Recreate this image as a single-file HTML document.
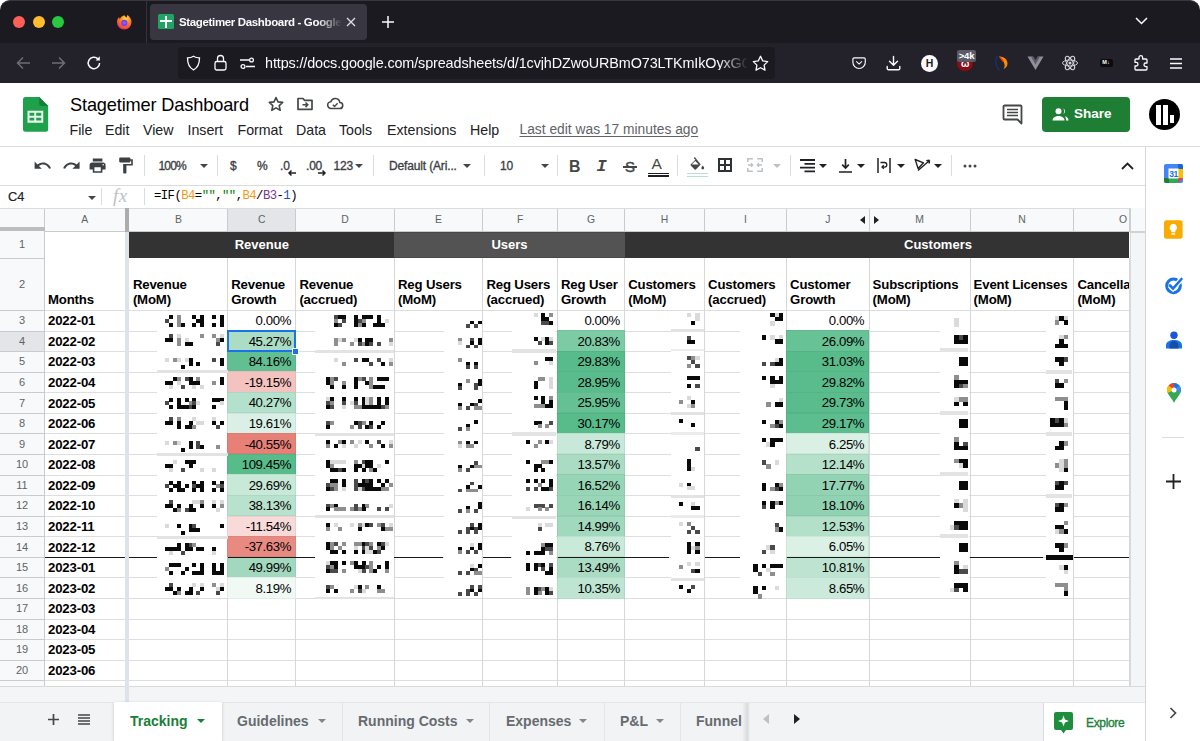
<!DOCTYPE html>
<html lang="en"><head><meta charset="utf-8"><title>Stagetimer Dashboard - Google Sheets</title>
<style>
*{box-sizing:border-box;margin:0;padding:0}
html,body{width:1200px;height:741px;overflow:hidden;background:#fff}
body{font-family:"Liberation Sans",Arial,sans-serif;position:relative;color:#202124}
.a{position:absolute}
.t{position:absolute;white-space:nowrap;line-height:1}
svg{position:absolute;overflow:visible}
#tabstrip{left:0;top:0;width:1200px;height:43px;background:#1b1a20;border-radius:10px 10px 0 0;border-top:1px solid #38373e}
#navbar{left:0;top:43px;width:1200px;height:40px;background:#23222b}
#urlbar{left:178px;top:47px;width:597px;height:32px;background:#1b1a20;border-radius:4px}
#acttab{left:150px;top:4px;width:217px;height:36px;background:#383741;border-radius:4px}
.menu{font-size:14.2px;color:#202124;top:123px}
.colh{font-size:10.4px;color:#5f6368;top:214.500px;text-align:center}
.rowh{font-size:11px;color:#5f6368;left:0;width:44px;text-align:center}
.hd{font-size:13.2px;letter-spacing:-.16px;font-weight:bold;color:#000;line-height:1;height:15px}
.pc{letter-spacing:-.4px;font-size:13.2px;color:#000;text-align:right}
.mo{letter-spacing:-.16px;font-size:13.2px;font-weight:bold;color:#000;left:48px}
.sheettab{font-size:14px;font-weight:bold;color:#676b70;top:714px}
.band{font-size:13px;font-weight:bold;color:#fff;text-align:center;top:238px}
</style></head><body>
<!-- ===== Browser chrome ===== -->
<div class="a" id="tabstrip"></div>
<div class="a" id="navbar"></div>
<div class="a" style="left:146px;top:0;width:1px;height:43px;background:#34333b"></div>
<div class="a" style="left:13px;top:15.5px;width:12px;height:12px;border-radius:50%;background:#fe5f57"></div>
<div class="a" style="left:32.5px;top:15.5px;width:12px;height:12px;border-radius:50%;background:#febc2e"></div>
<div class="a" style="left:52px;top:15.5px;width:12px;height:12px;border-radius:50%;background:#28c840"></div>
<!-- firefox icon -->
<svg style="left:115.500px;top:13.800px" width="16.500" height="16.500" viewBox="0 0 17 17"><defs><radialGradient id="fx" cx="0.6" cy="0.25" r="0.9"><stop offset="0" stop-color="#ffdc3e"/><stop offset="0.45" stop-color="#ff7a18"/><stop offset="1" stop-color="#e31587"/></radialGradient></defs><path d="M8.5 1.2c1 .8 1.6 1.6 1.9 2.6 1-.9 1.3-2 1.2-3 2.6 1.700 4.400 4.600 4.400 7.700a7.500 7.500 0 0 1-15 0c0-2.200.8-4 2.200-5.300 0 .8.200 1.400.6 1.900C4.500 3.500 6.300 2 8.500 1.200z" fill="url(#fx)"/><circle cx="8.6" cy="9.2" r="3.2" fill="#7542e5"/><circle cx="8.6" cy="9.200" r="1.700" fill="#9059ff"/></svg>
<div class="a" id="acttab"></div>
<!-- sheets favicon -->
<div class="a" style="left:158px;top:14px;width:16px;height:15px;background:#1fa463;border-radius:1.5px"></div>
<div class="a" style="left:164.500px;top:15.500px;width:2px;height:12px;background:#fff"></div>
<div class="a" style="left:160px;top:19.500px;width:12px;height:2px;background:#fff"></div>
<div class="t" style="left:179px;top:16.800px;font-size:11.500px;color:#fbfbfe;width:163px;overflow:hidden;font-weight:bold;letter-spacing:-.35px;-webkit-mask-image:linear-gradient(90deg,#000 85%,transparent 100%);mask-image:linear-gradient(90deg,#000 85%,transparent 100%)">Stagetimer Dashboard - Google Sheets</div>
<svg style="left:346px;top:16.500px" width="10" height="10" viewBox="0 0 10 10"><path d="M1 1l8 8M9 1l-8 8" stroke="#e0e0e6" stroke-width="1.300" fill="none"/></svg>
<svg style="left:381px;top:15px" width="14" height="14" viewBox="0 0 14 14"><path d="M7 1v12M1 7h12" stroke="#fbfbfe" stroke-width="1.500" fill="none"/></svg>
<svg style="left:1135px;top:17px" width="13" height="8" viewBox="0 0 13 8"><path d="M1 1l5.500 5.500L12 1" stroke="#fbfbfe" stroke-width="1.500" fill="none"/></svg>
<!-- nav buttons -->
<svg style="left:16px;top:56px" width="15" height="14" viewBox="0 0 15 14"><path d="M14 7H2M7 1.500L1.500 7 7 12.500" stroke="#6e6d76" stroke-width="1.500" fill="none"/></svg>
<svg style="left:51px;top:56px" width="15" height="14" viewBox="0 0 15 14"><path d="M1 7h12M8 1.500L13.500 7 8 12.500" stroke="#6e6d76" stroke-width="1.500" fill="none"/></svg>
<svg style="left:86px;top:55px" width="16" height="16" viewBox="0 0 16 16"><path d="M13.600 8a5.700 5.700 0 1 1-1.700-4.100" stroke="#fbfbfe" stroke-width="1.500" fill="none"/><path d="M13.800 1.200v4.200H9.600z" fill="#fbfbfe"/></svg>
<div class="a" id="urlbar"></div>
<!-- shield -->
<svg style="left:186px;top:55px" width="15" height="16" viewBox="0 0 15 16"><path d="M7.500 1.200c2 1.200 4 1.600 6 1.700 0 5.500-1.500 9.600-6 11.900-4.500-2.300-6-6.400-6-11.900 2-.1 4-.5 6-1.700z" stroke="#fbfbfe" stroke-width="1.300" fill="none"/></svg>
<!-- lock -->
<svg style="left:214px;top:54px" width="13" height="17" viewBox="0 0 13 17"><rect x="1" y="7.500" width="11" height="8.500" rx="1.800" stroke="#fbfbfe" stroke-width="1.300" fill="none"/><path d="M3.500 7.500V4.500a3 3 0 0 1 6 0v3" stroke="#fbfbfe" stroke-width="1.300" fill="none"/></svg>
<!-- permissions -->
<svg style="left:240px;top:57px" width="15" height="12" viewBox="0 0 15 12"><path d="M0 3h9M6 9.500h9" stroke="#fbfbfe" stroke-width="1.300"/><circle cx="11.500" cy="3" r="1.900" stroke="#fbfbfe" stroke-width="1.300" fill="none"/><circle cx="3" cy="9.500" r="1.900" stroke="#fbfbfe" stroke-width="1.300" fill="none"/></svg>
<div class="t" style="left:265px;top:56px;font-size:14.400px;letter-spacing:-.12px;color:#fbfbfe;width:483px;overflow:hidden;-webkit-mask-image:linear-gradient(90deg,#000 94%,transparent 100%);mask-image:linear-gradient(90deg,#000 94%,transparent 100%)">https://docs.google.com/spreadsheets/d/1cvjhDZwoURBmO73LTKmIkOyxGCf8</div>
<!-- bookmark star -->
<svg style="left:752px;top:54.500px" width="17" height="16" viewBox="0 0 17 16"><path d="M8.500 1.300l2.200 4.600 5 .7-3.600 3.500.9 5-4.500-2.400L4 15.100l.9-5L1.300 6.600l5-.7z" stroke="#fbfbfe" stroke-width="1.300" fill="none" stroke-linejoin="round"/></svg>
<!-- pocket -->
<svg style="left:852px;top:57px" width="14.200" height="12.400" viewBox="0 0 16 14"><path d="M2.500 1h11a1.500 1.500 0 0 1 1.500 1.500V6a7 7 0 0 1-14 0V2.500A1.500 1.500 0 0 1 2.500 1z" stroke="#fbfbfe" stroke-width="1.300" fill="none"/><path d="M4.800 5l3.200 3 3.200-3" stroke="#fbfbfe" stroke-width="1.300" fill="none"/></svg>
<!-- download -->
<svg style="left:886px;top:55px" width="15" height="16" viewBox="0 0 15 16"><path d="M7.500 1.500v8.500M3.500 6.200l4 4 4-4M1.200 11.500v2a1.200 1.200 0 0 0 1.200 1.200h10.200a1.200 1.200 0 0 0 1.200-1.200v-2" stroke="#fbfbfe" stroke-width="1.400" fill="none" stroke-linecap="round" stroke-linejoin="round"/></svg>
<!-- H -->
<div class="a" style="left:921px;top:54.500px;width:17px;height:17px;border-radius:50%;background:#fbfbfe"></div>
<div class="t" style="left:921px;top:58px;width:17px;text-align:center;font-size:10.500px;font-weight:bold;color:#1c1b22">H</div>
<!-- ublock -->
<div class="a" style="left:957.300px;top:56px;width:16px;height:14.500px;border-radius:50%;background:#8c0b14"></div>
<div class="t" style="left:957.300px;top:59px;width:16px;text-align:center;font-size:10px;color:#fff;font-weight:bold">ω</div>
<div class="a" style="left:957px;top:50.300px;width:19px;height:11.400px;border-radius:2px;background:#5b5b66"></div>
<div class="t" style="left:957px;top:51.300px;width:19px;text-align:center;font-size:9.500px;font-weight:bold;color:#fff;letter-spacing:-.2px">&gt;4k</div>
<!-- orange -->
<svg style="left:994px;top:54px" width="15" height="18" viewBox="0 0 15 18"><path d="M3.500 2C1.500 5 1.500 9 3 12.500c.6 1.500 1.500 3 2.500 4" stroke="#16306b" stroke-width="1.600" fill="none"/><path d="M5.500 2.500c4.500 0 8 3 8 7 0 2.800-1.800 4.800-4 5.500 1.600-2 1.500-4.500.2-6.700S6.300 4.500 5.500 2.500z" fill="#ff8a00"/><path d="M5.500 2.500c1.500 1.800 3 3.300 4 5.500" stroke="#e0431a" stroke-width="1.200" fill="none"/></svg>
<!-- V -->
<svg style="left:1027px;top:56px" width="17" height="14" viewBox="0 0 17 14"><path d="M0.500 0.500h5l3 5.500 3-5.500h5L8.500 14z" fill="#8f8f9d"/><path d="M4 0.500h2.500l2 3.500 2-3.500H13L8.500 8.500z" fill="#5b5b66"/></svg>
<!-- react -->
<svg style="left:1061px;top:54px" width="18" height="18" viewBox="-9 -9 18 18"><circle r="1.500" fill="#d0d0d7"/><g stroke="#d0d0d7" stroke-width="1" fill="none"><ellipse rx="7.500" ry="3"/><ellipse rx="7.500" ry="3" transform="rotate(60)"/><ellipse rx="7.500" ry="3" transform="rotate(120)"/></g></svg>
<!-- M arrow -->
<div class="a" style="left:1099.500px;top:58.800px;width:13px;height:8px;border-radius:2px;background:#0c0c0d"></div>
<div class="t" style="left:1099.500px;top:60.300px;width:13px;text-align:center;font-size:5.500px;font-weight:bold;color:#fff">M↓</div>
<!-- extensions puzzle -->
<svg style="left:1133px;top:54px" width="17" height="17" viewBox="0 0 17 17"><path d="M6 3.500a1.800 1.800 0 0 1 3.600 0V5h3.400a1 1 0 0 1 1 1v3h-1.200a1.800 1.800 0 0 0 0 3.600H14V15a1 1 0 0 1-1 1H3a1 1 0 0 1-1-1v-3h1.200a1.800 1.800 0 0 0 0-3.600H2V6a1 1 0 0 1 1-1h3z" stroke="#fbfbfe" stroke-width="1.300" fill="none" stroke-linejoin="round"/></svg>
<!-- hamburger -->
<svg style="left:1170.300px;top:57.500px" width="12" height="11" viewBox="0 0 12 11"><path d="M0 1h12M0 5.500h12M0 10h12" stroke="#fbfbfe" stroke-width="1.300"/></svg>
<!-- ===== Docs header ===== -->
<svg style="left:22.800px;top:97px" width="25.200" height="34.800" viewBox="0 0 50.400 69.600"><path d="M5 0h27.400l18 18v46.600a5 5 0 0 1-5 5H5a5 5 0 0 1-5-5V5a5 5 0 0 1 5-5z" fill="#1fa04b"/><path d="M32.400 0l18 18H37.400a5 5 0 0 1-5-5z" fill="#12803a"/><path d="M9 27.500h31.500v24H9zM13 31.500v5.800h9.500v-5.800zM26.500 31.500v5.800H36.500v-5.800zM13 41.300v5.800h9.500v-5.800zM26.500 41.300v5.800H36.500v-5.800z" fill="#e9f6ec" fill-rule="evenodd"/></svg>
<div class="t" id="doctitle" style="left:70px;top:96px;font-size:18.200px;color:#000;letter-spacing:-.15px">Stagetimer Dashboard</div>
<!-- star -->
<svg style="left:268px;top:96px" width="16" height="16" viewBox="0 0 16 16"><path d="M8 1.500l2 4.400 4.700.5-3.500 3.200 1 4.700L8 11.900l-4.200 2.400 1-4.700L1.300 6.400 6 5.900z" stroke="#444746" stroke-width="1.600" fill="none" stroke-linejoin="round"/></svg>
<!-- move folder -->
<svg style="left:297px;top:97px" width="16" height="13" viewBox="0 0 16 13"><path d="M1 1.500h5l1.500 1.800H15v9H1z" stroke="#444746" stroke-width="1.700" fill="none" stroke-linejoin="round"/><path d="M5.500 7.800h5M8.500 5.500l2.300 2.300-2.300 2.300" stroke="#444746" stroke-width="1.500" fill="none"/></svg>
<!-- cloud -->
<svg style="left:327px;top:98.200px" width="16.800" height="11.200" viewBox="0 0 18 12"><path d="M4.500 11.200a3.600 3.600 0 0 1-.4-7.200A5 5 0 0 1 13.800 4.800a3.200 3.200 0 0 1-.3 6.400z" stroke="#444746" stroke-width="1.700" fill="none"/><path d="M6.300 7.200l1.800 1.800 3.300-3.300" stroke="#444746" stroke-width="1.500" fill="none"/></svg>
<div class="t menu" style="left:69.500px">File</div>
<div class="t menu" style="left:105px">Edit</div>
<div class="t menu" style="left:143px">View</div>
<div class="t menu" style="left:187.500px">Insert</div>
<div class="t menu" style="left:237.500px">Format</div>
<div class="t menu" style="left:296px">Data</div>
<div class="t menu" style="left:339px">Tools</div>
<div class="t menu" style="left:387px">Extensions</div>
<div class="t menu" style="left:470px">Help</div>
<div class="t menu" id="lastedit" style="left:519.500px;font-size:13.800px;top:123.300px;color:#5f6368;text-decoration:underline;text-underline-offset:2px">Last edit was 17 minutes ago</div>
<!-- comment icon -->
<svg style="left:1002px;top:104px" width="21" height="21" viewBox="0 0 21 21"><path d="M2.500 1.500h16a1 1 0 0 1 1 1v17l-4-4h-13a1 1 0 0 1-1-1v-12a1 1 0 0 1 1-1z" stroke="#444746" stroke-width="1.800" fill="none" stroke-linejoin="round"/><path d="M5 5.500h11M5 8.500h11M5 11.500h11" stroke="#444746" stroke-width="1.500"/></svg>
<!-- share -->
<div class="a" style="left:1041.500px;top:97px;width:88px;height:35px;border-radius:4px;background:#1e7e34"></div>
<svg style="left:1052px;top:107.500px" width="17" height="13" viewBox="0 0 17 13"><circle cx="6.500" cy="3.300" r="3" fill="#fff"/><path d="M0.500 12.500c0-3 3-4.500 6-4.500s6 1.500 6 4.500z" fill="#fff"/><path d="M11.200 0.600a3 3 0 0 1 0 5.500 4.500 4.500 0 0 0 0-5.500zM13 8.300c1.800.6 3.500 1.800 3.500 4.200H14c0-1.800-.4-3.200-1-4.200z" fill="#fff"/></svg>
<div class="t" style="left:1074px;top:106.500px;font-size:13.500px;font-weight:bold;color:#fff">Share</div>
<!-- avatar -->
<div class="a" style="left:1148.800px;top:98.500px;width:31.600px;height:31.600px;border-radius:50%;background:#000;overflow:hidden"><div class="a" style="left:7.400px;top:6.500px;width:4.800px;height:19.500px;background:#fff"></div><div class="a" style="left:14.400px;top:6.500px;width:4.800px;height:19.500px;background:#fff"></div><div class="a" style="left:21px;top:16.200px;width:4.300px;height:8.800px;background:#fff"></div></div>
<div class="a" style="left:0;top:146px;width:1200px;height:1px;background:#dadce0"></div>
<!-- ===== Toolbar ===== -->
<div class="a" style="left:0;top:184.500px;width:1146px;height:1px;background:#dadce0"></div>
<style>.tb{font-size:12px;color:#3c4043;top:160px;-webkit-text-stroke:.32px #3c4043;letter-spacing:-.2px}.sep{position:absolute;top:155px;width:1px;height:21px;background:#dadce0}</style>
<!-- undo -->
<svg style="left:33.200px;top:155.900px" width="19.200" height="19.200" viewBox="0 0 24 24"><path d="M12.500 8c-2.650 0-5.050.99-6.900 2.600L2 7v9h9l-3.620-3.620c1.390-1.160 3.160-1.880 5.120-1.880 3.540 0 6.550 2.310 7.600 5.500l2.370-.78C21.080 11.030 17.150 8 12.500 8z" fill="#3c4043"/></svg>
<!-- redo -->
<svg style="left:61.600px;top:155.900px" width="19.200" height="19.200" viewBox="0 0 24 24"><path d="M18.400 10.600C16.550 8.990 14.150 8 11.500 8c-4.650 0-8.580 3.030-9.960 7.220L3.900 16c1.050-3.190 4.050-5.500 7.600-5.500 1.950 0 3.730.72 5.120 1.880L13 16h9V7l-3.600 3.600z" fill="#3c4043"/></svg>
<!-- print -->
<svg style="left:88.400px;top:155.900px" width="19.200" height="19.200" viewBox="0 0 24 24"><path d="M19 8H5c-1.660 0-3 1.340-3 3v6h4v4h12v-4h4v-6c0-1.660-1.340-3-3-3zm-3 11H8v-5h8v5zm3-7c-.55 0-1-.45-1-1s.45-1 1-1 1 .45 1 1-.45 1-1 1zm-1-9H6v4h12V3z" fill="#3c4043"/></svg>
<!-- paint format -->
<svg style="left:115.800px;top:155.900px" width="19.200" height="19.200" viewBox="0 0 24 24"><path d="M18 4V3c0-.55-.45-1-1-1H5c-.55 0-1 .45-1 1v4c0 .55.450 1 1 1h12c.55 0 1-.45 1-1V6h1v4H9v11c0 .55.450 1 1 1h2c.55 0 1-.45 1-1v-9h8V4h-3z" fill="#3c4043"/></svg>
<div class="sep" style="left:143.500px"></div>
<div class="t tb" style="left:158.500px;letter-spacing:-.8px">100%</div>
<svg style="left:200px;top:164px" width="8" height="4" viewBox="0 0 8 4"><path d="M0 0h8L4 4z" fill="#444746"/></svg>
<div class="sep" style="left:216.500px"></div>
<div class="t tb" style="left:230px">$</div>
<div class="t tb" style="left:257px">%</div>
<div class="t tb" style="left:280px">.0</div>
<svg style="left:288px;top:170px" width="8" height="6" viewBox="0 0 8 6"><path d="M8 3H1.500M3.500 0.500L1 3l2.500 2.500" stroke="#202124" stroke-width="1.500" fill="none"/></svg>
<div class="t tb" style="left:306px">.00</div>
<svg style="left:318px;top:170px" width="8" height="6" viewBox="0 0 8 6"><path d="M0 3h6.500M4.500 0.500L7 3 4.500 5.500" stroke="#202124" stroke-width="1.500" fill="none"/></svg>
<div class="t tb" style="left:333.500px">123</div>
<svg style="left:355px;top:164px" width="8" height="4" viewBox="0 0 8 4"><path d="M0 0h8L4 4z" fill="#444746"/></svg>
<div class="sep" style="left:372.500px"></div>
<div class="t tb" style="left:389px;letter-spacing:-.15px">Default (Ari...</div>
<svg style="left:463px;top:164px" width="8" height="4" viewBox="0 0 8 4"><path d="M0 0h8L4 4z" fill="#444746"/></svg>
<div class="sep" style="left:483.500px"></div>
<div class="t tb" style="left:500px">10</div>
<svg style="left:540.500px;top:164px" width="8" height="4" viewBox="0 0 8 4"><path d="M0 0h8L4 4z" fill="#444746"/></svg>
<div class="sep" style="left:557px"></div>
<div class="t" style="left:569px;top:158.500px;font-size:15.800px;font-weight:bold;color:#444746">B</div>
<div class="t" style="left:596.500px;top:157.800px;font-size:17px;font-weight:bold;font-style:italic;color:#444746;font-family:'Liberation Mono','Liberation Sans',monospace">I</div>
<div class="t" style="left:625px;top:159.300px;font-size:15px;color:#444746;-webkit-text-stroke:.4px #444746">S</div><div class="a" style="left:623px;top:166px;width:14px;height:1.500px;background:#444746"></div>
<div class="t" style="left:651.500px;top:156px;font-size:15.500px;color:#444746">A</div>
<div class="a" style="left:648.300px;top:173.200px;width:20.700px;height:1.300px;background:#202124"></div><div class="a" style="left:648.300px;top:175.400px;width:20.700px;height:1.700px;background:#202124"></div>
<div class="sep" style="left:677px"></div>
<!-- fill color -->
<svg style="left:688.500px;top:157px" width="16" height="13.300" viewBox="0 0 18 15"><path d="M6.500 0L5.300 1.200l1.900 1.900L2 8.300a1 1 0 0 0 0 1.400l4.300 4.300a1 1 0 0 0 1.400 0l5.500-5.500zM7 4.500l4 4H3z" fill="#444746" fill-rule="evenodd"/><path d="M15.500 9.500s-1.600 1.800-1.600 2.900a1.600 1.600 0 0 0 3.200 0c0-1.100-1.600-2.900-1.600-2.900z" fill="#444746"/></svg>
<div class="a" style="left:686.500px;top:173px;width:21px;height:1px;background:#b7e1cd"></div><div class="a" style="left:686.500px;top:175.600px;width:21px;height:1.200px;background:#b7e1cd"></div>
<!-- borders -->
<svg style="left:718px;top:158px" width="14" height="14" viewBox="0 0 14 14"><path d="M1 1h12v12H1zM7 1v12M1 7h12" stroke="#303134" stroke-width="2" fill="none"/></svg>
<!-- merge (disabled) -->
<svg style="left:747px;top:158px" width="16" height="14" viewBox="0 0 16 14"><path d="M0.800 4V0.800h5M10.200 0.800h5V4M15.200 10v3.200h-5M5.800 13.200h-5V10" stroke="#bdc1c6" stroke-width="1.500" fill="none"/><path d="M1 7h4.500M15 7h-4.500M4 5.300L5.700 7 4 8.700M12 5.300L10.300 7 12 8.700" stroke="#bdc1c6" stroke-width="1.300" fill="none"/></svg>
<svg style="left:773px;top:164px" width="8" height="4" viewBox="0 0 8 4"><path d="M0 0h8L4 4z" fill="#bdc1c6"/></svg>
<div class="sep" style="left:790px"></div>
<!-- halign (right) -->
<svg style="left:799.500px;top:158.500px" width="15" height="13" viewBox="0 0 15 13"><path d="M0 1h15M4.500 4.800h10.500M0 8.600h15M4.500 12.400h10.500" stroke="#202124" stroke-width="1.800"/></svg>
<svg style="left:819px;top:164px" width="8" height="4" viewBox="0 0 8 4"><path d="M0 0h8L4 4z" fill="#202124"/></svg>
<!-- valign bottom -->
<svg style="left:838.500px;top:158.500px" width="13" height="14" viewBox="0 0 13 14"><path d="M6.500 0v9M3.200 5.700l3.300 3.300 3.300-3.300M0 13h13" stroke="#202124" stroke-width="1.700" fill="none"/></svg>
<svg style="left:856.500px;top:164px" width="8" height="4" viewBox="0 0 8 4"><path d="M0 0h8L4 4z" fill="#202124"/></svg>
<!-- wrap/clip -->
<svg style="left:877px;top:157.500px" width="14" height="15" viewBox="0 0 14 15"><path d="M1 0v15M13 0v15" stroke="#202124" stroke-width="1.500"/><path d="M3.500 4.500h4a2.300 2.300 0 0 1 0 4.600H5M6.800 7.300L5 9.100l1.800 1.800" stroke="#202124" stroke-width="1.300" fill="none"/></svg>
<svg style="left:896.500px;top:164px" width="8" height="4" viewBox="0 0 8 4"><path d="M0 0h8L4 4z" fill="#202124"/></svg>
<!-- rotate -->
<svg style="left:914px;top:157px" width="17" height="16" viewBox="0 0 17 16"><path d="M1.200 2.500l8.300 3.300-5.400 5.800zM4 13.500L15 4M15.500 3.300l-3.200.3M15.500 3.300l-.3 3.200" stroke="#202124" stroke-width="1.400" fill="none" stroke-linejoin="round"/></svg>
<svg style="left:934px;top:164px" width="8" height="4" viewBox="0 0 8 4"><path d="M0 0h8L4 4z" fill="#202124"/></svg>
<div class="sep" style="left:951px"></div>
<svg style="left:963px;top:164px" width="14" height="4" viewBox="0 0 14 4"><circle cx="2" cy="2" r="1.500" fill="#444746"/><circle cx="7" cy="2" r="1.500" fill="#444746"/><circle cx="12" cy="2" r="1.500" fill="#444746"/></svg>
<svg style="left:1120.500px;top:162px" width="13" height="8" viewBox="0 0 13 8"><path d="M1 7l5.500-5.500L12 7" stroke="#202124" stroke-width="1.800" fill="none"/></svg>
<!-- ===== Formula bar ===== -->
<div class="t" style="left:8px;top:191.300px;font-size:12.800px;color:#202124;-webkit-text-stroke:.2px #202124">C4</div>
<svg style="left:87.500px;top:195.500px" width="8" height="4" viewBox="0 0 8 4"><path d="M0 0h8L4 4z" fill="#444746"/></svg>
<div class="a" style="left:101px;top:188px;width:1px;height:17px;background:#dadce0"></div>
<div class="t" style="left:113px;top:186px;font-size:19px;font-style:italic;color:#bdc1c6;font-family:'Liberation Serif',serif;letter-spacing:.5px">fx</div>
<div class="a" style="left:143.500px;top:188px;width:1px;height:17px;background:#dadce0"></div>
<div class="t" style="left:154px;top:190px;font-size:12.300px;color:#000;font-family:'Liberation Mono',monospace;letter-spacing:-.58px">=IF(<span style="color:#f7981d">B4</span>=<span style="color:#008000">""</span>,<span style="color:#008000">""</span>,<span style="color:#f7981d">B4</span>/<span style="color:#7e3794">B3</span>-<span style="color:#1155cc">1</span>)</div>
<div class="a" style="left:0;top:207.500px;width:1146px;height:1px;background:#dadce0"></div>
<!-- ===== Grid ===== -->
<div class="a" style="left:0;top:208px;width:1129.5px;height:23.500px;background:#f8f9fa"></div>
<div class="a" style="left:0;top:231px;width:44.500px;height:455px;background:#f8f9fa"></div>
<div class="a" style="left:227.6px;top:208px;width:68.2px;height:23.500px;background:#e3e5e9"></div>
<div class="a" style="left:0;top:331.00px;width:44.500px;height:20.58px;background:#e3e5e9"></div>
<div class="a" style="left:0;top:309.50px;width:1129.5px;height:1px;background:#dddedf"></div>
<div class="a" style="left:0;top:330.50px;width:1129.5px;height:1px;background:#dddedf"></div>
<div class="a" style="left:0;top:351.08px;width:1129.5px;height:1px;background:#dddedf"></div>
<div class="a" style="left:0;top:371.66px;width:1129.5px;height:1px;background:#dddedf"></div>
<div class="a" style="left:0;top:392.24px;width:1129.5px;height:1px;background:#dddedf"></div>
<div class="a" style="left:0;top:412.82px;width:1129.5px;height:1px;background:#dddedf"></div>
<div class="a" style="left:0;top:433.40px;width:1129.5px;height:1px;background:#dddedf"></div>
<div class="a" style="left:0;top:453.98px;width:1129.5px;height:1px;background:#dddedf"></div>
<div class="a" style="left:0;top:474.56px;width:1129.5px;height:1px;background:#dddedf"></div>
<div class="a" style="left:0;top:495.14px;width:1129.5px;height:1px;background:#dddedf"></div>
<div class="a" style="left:0;top:515.72px;width:1129.5px;height:1px;background:#dddedf"></div>
<div class="a" style="left:0;top:536.30px;width:1129.5px;height:1px;background:#dddedf"></div>
<div class="a" style="left:0;top:556.88px;width:1129.5px;height:1px;background:#dddedf"></div>
<div class="a" style="left:0;top:577.46px;width:1129.5px;height:1px;background:#dddedf"></div>
<div class="a" style="left:0;top:598.04px;width:1129.5px;height:1px;background:#dddedf"></div>
<div class="a" style="left:0;top:618.62px;width:1129.5px;height:1px;background:#dddedf"></div>
<div class="a" style="left:0;top:639.20px;width:1129.5px;height:1px;background:#dddedf"></div>
<div class="a" style="left:0;top:659.78px;width:1129.5px;height:1px;background:#dddedf"></div>
<div class="a" style="left:0;top:680.36px;width:1129.5px;height:1px;background:#dddedf"></div>
<div class="a" style="left:0;top:257.80px;width:44.500px;height:1px;background:#c8cbd0"></div>
<div class="a" style="left:0;top:309.50px;width:44.500px;height:1px;background:#c8cbd0"></div>
<div class="a" style="left:0;top:330.50px;width:44.500px;height:1px;background:#c8cbd0"></div>
<div class="a" style="left:0;top:351.08px;width:44.500px;height:1px;background:#c8cbd0"></div>
<div class="a" style="left:0;top:371.66px;width:44.500px;height:1px;background:#c8cbd0"></div>
<div class="a" style="left:0;top:392.24px;width:44.500px;height:1px;background:#c8cbd0"></div>
<div class="a" style="left:0;top:412.82px;width:44.500px;height:1px;background:#c8cbd0"></div>
<div class="a" style="left:0;top:433.40px;width:44.500px;height:1px;background:#c8cbd0"></div>
<div class="a" style="left:0;top:453.98px;width:44.500px;height:1px;background:#c8cbd0"></div>
<div class="a" style="left:0;top:474.56px;width:44.500px;height:1px;background:#c8cbd0"></div>
<div class="a" style="left:0;top:495.14px;width:44.500px;height:1px;background:#c8cbd0"></div>
<div class="a" style="left:0;top:515.72px;width:44.500px;height:1px;background:#c8cbd0"></div>
<div class="a" style="left:0;top:536.30px;width:44.500px;height:1px;background:#c8cbd0"></div>
<div class="a" style="left:0;top:556.88px;width:44.500px;height:1px;background:#c8cbd0"></div>
<div class="a" style="left:0;top:577.46px;width:44.500px;height:1px;background:#c8cbd0"></div>
<div class="a" style="left:0;top:598.04px;width:44.500px;height:1px;background:#c8cbd0"></div>
<div class="a" style="left:0;top:618.62px;width:44.500px;height:1px;background:#c8cbd0"></div>
<div class="a" style="left:0;top:639.20px;width:44.500px;height:1px;background:#c8cbd0"></div>
<div class="a" style="left:0;top:659.78px;width:44.500px;height:1px;background:#c8cbd0"></div>
<div class="a" style="left:0;top:680.36px;width:44.500px;height:1px;background:#c8cbd0"></div>
<div class="a" style="left:44.0px;top:208px;width:1px;height:478px;background:#c8cbd0"></div>
<div class="a" style="left:227.1px;top:208px;width:1px;height:23.500px;background:#c8cbd0"></div>
<div class="a" style="left:227.1px;top:258px;width:1px;height:428px;background:#d6d7d8"></div>
<div class="a" style="left:295.3px;top:208px;width:1px;height:23.500px;background:#c8cbd0"></div>
<div class="a" style="left:295.3px;top:258px;width:1px;height:428px;background:#d6d7d8"></div>
<div class="a" style="left:393.9px;top:208px;width:1px;height:23.500px;background:#c8cbd0"></div>
<div class="a" style="left:393.9px;top:258px;width:1px;height:428px;background:#d6d7d8"></div>
<div class="a" style="left:482.3px;top:208px;width:1px;height:23.500px;background:#c8cbd0"></div>
<div class="a" style="left:482.3px;top:258px;width:1px;height:428px;background:#d6d7d8"></div>
<div class="a" style="left:556.9px;top:208px;width:1px;height:23.500px;background:#c8cbd0"></div>
<div class="a" style="left:556.9px;top:258px;width:1px;height:428px;background:#d6d7d8"></div>
<div class="a" style="left:624.1px;top:208px;width:1px;height:23.500px;background:#c8cbd0"></div>
<div class="a" style="left:624.1px;top:258px;width:1px;height:428px;background:#d6d7d8"></div>
<div class="a" style="left:704.0px;top:208px;width:1px;height:23.500px;background:#c8cbd0"></div>
<div class="a" style="left:704.0px;top:258px;width:1px;height:428px;background:#d6d7d8"></div>
<div class="a" style="left:786.0px;top:208px;width:1px;height:23.500px;background:#c8cbd0"></div>
<div class="a" style="left:786.0px;top:258px;width:1px;height:428px;background:#d6d7d8"></div>
<div class="a" style="left:868.5px;top:208px;width:1px;height:23.500px;background:#c8cbd0"></div>
<div class="a" style="left:868.5px;top:258px;width:1px;height:428px;background:#d6d7d8"></div>
<div class="a" style="left:969.5px;top:208px;width:1px;height:23.500px;background:#c8cbd0"></div>
<div class="a" style="left:969.5px;top:258px;width:1px;height:428px;background:#d6d7d8"></div>
<div class="a" style="left:1073.3px;top:208px;width:1px;height:23.500px;background:#c8cbd0"></div>
<div class="a" style="left:1073.3px;top:258px;width:1px;height:428px;background:#d6d7d8"></div>
<div class="a" style="left:1129.0px;top:208px;width:1px;height:23.500px;background:#c8cbd0"></div>
<div class="a" style="left:1129.0px;top:258px;width:1px;height:428px;background:#d6d7d8"></div>
<div class="a" style="left:226.7px;top:330.30px;width:69.1px;height:21.28px;background:#aaddc4;box-shadow:inset 0 0 0 .6px rgba(0,40,20,.10)"></div>
<div class="a" style="left:226.7px;top:350.88px;width:69.1px;height:21.28px;background:#62bf92;box-shadow:inset 0 0 0 .6px rgba(0,40,20,.10)"></div>
<div class="a" style="left:226.7px;top:371.46px;width:69.1px;height:21.28px;background:#f4c3bf;box-shadow:inset 0 0 0 .6px rgba(0,40,20,.10)"></div>
<div class="a" style="left:226.7px;top:392.04px;width:69.1px;height:21.28px;background:#b4e1cb;box-shadow:inset 0 0 0 .6px rgba(0,40,20,.10)"></div>
<div class="a" style="left:226.7px;top:412.62px;width:69.1px;height:21.28px;background:#daf0e6;box-shadow:inset 0 0 0 .6px rgba(0,40,20,.10)"></div>
<div class="a" style="left:226.7px;top:433.20px;width:69.1px;height:21.28px;background:#e78178;box-shadow:inset 0 0 0 .6px rgba(0,40,20,.10)"></div>
<div class="a" style="left:226.7px;top:453.78px;width:69.1px;height:21.28px;background:#57bb8a;box-shadow:inset 0 0 0 .6px rgba(0,40,20,.10)"></div>
<div class="a" style="left:226.7px;top:474.36px;width:69.1px;height:21.28px;background:#c8e9d8;box-shadow:inset 0 0 0 .6px rgba(0,40,20,.10)"></div>
<div class="a" style="left:226.7px;top:494.94px;width:69.1px;height:21.28px;background:#b8e2cd;box-shadow:inset 0 0 0 .6px rgba(0,40,20,.10)"></div>
<div class="a" style="left:226.7px;top:515.52px;width:69.1px;height:21.28px;background:#f8dbd9;box-shadow:inset 0 0 0 .6px rgba(0,40,20,.10)"></div>
<div class="a" style="left:226.7px;top:536.10px;width:69.1px;height:21.28px;background:#e98a82;box-shadow:inset 0 0 0 .6px rgba(0,40,20,.10)"></div>
<div class="a" style="left:226.7px;top:556.68px;width:69.1px;height:21.28px;background:#a2d9be;box-shadow:inset 0 0 0 .6px rgba(0,40,20,.10)"></div>
<div class="a" style="left:226.7px;top:577.26px;width:69.1px;height:21.28px;background:#f0f9f4;box-shadow:inset 0 0 0 .6px rgba(0,40,20,.10)"></div>
<div class="a" style="left:556.5px;top:330.30px;width:68.1px;height:21.28px;background:#7dcba5;box-shadow:inset 0 0 0 .6px rgba(0,40,20,.10)"></div>
<div class="a" style="left:556.5px;top:350.88px;width:68.1px;height:21.28px;background:#58bb8b;box-shadow:inset 0 0 0 .6px rgba(0,40,20,.10)"></div>
<div class="a" style="left:556.5px;top:371.46px;width:68.1px;height:21.28px;background:#5abc8c;box-shadow:inset 0 0 0 .6px rgba(0,40,20,.10)"></div>
<div class="a" style="left:556.5px;top:392.04px;width:68.1px;height:21.28px;background:#65c194;box-shadow:inset 0 0 0 .6px rgba(0,40,20,.10)"></div>
<div class="a" style="left:556.5px;top:412.62px;width:68.1px;height:21.28px;background:#57bb8a;box-shadow:inset 0 0 0 .6px rgba(0,40,20,.10)"></div>
<div class="a" style="left:556.5px;top:433.20px;width:68.1px;height:21.28px;background:#c8e9d9;box-shadow:inset 0 0 0 .6px rgba(0,40,20,.10)"></div>
<div class="a" style="left:556.5px;top:453.78px;width:68.1px;height:21.28px;background:#a9dcc3;box-shadow:inset 0 0 0 .6px rgba(0,40,20,.10)"></div>
<div class="a" style="left:556.5px;top:474.36px;width:68.1px;height:21.28px;background:#96d5b6;box-shadow:inset 0 0 0 .6px rgba(0,40,20,.10)"></div>
<div class="a" style="left:556.5px;top:494.94px;width:68.1px;height:21.28px;background:#99d6b8;box-shadow:inset 0 0 0 .6px rgba(0,40,20,.10)"></div>
<div class="a" style="left:556.5px;top:515.52px;width:68.1px;height:21.28px;background:#a0d9bd;box-shadow:inset 0 0 0 .6px rgba(0,40,20,.10)"></div>
<div class="a" style="left:556.5px;top:536.10px;width:68.1px;height:21.28px;background:#c9e9d9;box-shadow:inset 0 0 0 .6px rgba(0,40,20,.10)"></div>
<div class="a" style="left:556.5px;top:556.68px;width:68.1px;height:21.28px;background:#aadcc4;box-shadow:inset 0 0 0 .6px rgba(0,40,20,.10)"></div>
<div class="a" style="left:556.5px;top:577.26px;width:68.1px;height:21.28px;background:#bee5d2;box-shadow:inset 0 0 0 .6px rgba(0,40,20,.10)"></div>
<div class="a" style="left:785.6px;top:330.30px;width:83.4px;height:21.28px;background:#67c295;box-shadow:inset 0 0 0 .6px rgba(0,40,20,.10)"></div>
<div class="a" style="left:785.6px;top:350.88px;width:83.4px;height:21.28px;background:#57bb8a;box-shadow:inset 0 0 0 .6px rgba(0,40,20,.10)"></div>
<div class="a" style="left:785.6px;top:371.46px;width:83.4px;height:21.28px;background:#5abc8c;box-shadow:inset 0 0 0 .6px rgba(0,40,20,.10)"></div>
<div class="a" style="left:785.6px;top:392.04px;width:83.4px;height:21.28px;background:#5abc8c;box-shadow:inset 0 0 0 .6px rgba(0,40,20,.10)"></div>
<div class="a" style="left:785.6px;top:412.62px;width:83.4px;height:21.28px;background:#5cbd8e;box-shadow:inset 0 0 0 .6px rgba(0,40,20,.10)"></div>
<div class="a" style="left:785.6px;top:433.20px;width:83.4px;height:21.28px;background:#daf0e5;box-shadow:inset 0 0 0 .6px rgba(0,40,20,.10)"></div>
<div class="a" style="left:785.6px;top:453.78px;width:83.4px;height:21.28px;background:#b5e1cb;box-shadow:inset 0 0 0 .6px rgba(0,40,20,.10)"></div>
<div class="a" style="left:785.6px;top:474.36px;width:83.4px;height:21.28px;background:#92d3b3;box-shadow:inset 0 0 0 .6px rgba(0,40,20,.10)"></div>
<div class="a" style="left:785.6px;top:494.94px;width:83.4px;height:21.28px;background:#90d2b2;box-shadow:inset 0 0 0 .6px rgba(0,40,20,.10)"></div>
<div class="a" style="left:785.6px;top:515.52px;width:83.4px;height:21.28px;background:#b2e0c9;box-shadow:inset 0 0 0 .6px rgba(0,40,20,.10)"></div>
<div class="a" style="left:785.6px;top:536.10px;width:83.4px;height:21.28px;background:#dbf1e6;box-shadow:inset 0 0 0 .6px rgba(0,40,20,.10)"></div>
<div class="a" style="left:785.6px;top:556.68px;width:83.4px;height:21.28px;background:#bde4d1;box-shadow:inset 0 0 0 .6px rgba(0,40,20,.10)"></div>
<div class="a" style="left:785.6px;top:577.26px;width:83.4px;height:21.28px;background:#cbeadb;box-shadow:inset 0 0 0 .6px rgba(0,40,20,.10)"></div>
<div class="a" style="left:0;top:207.500px;width:1146px;height:1px;background:#dadce0"></div>
<div class="a" style="left:44.500px;top:230.800px;width:1085.0px;height:1px;background:#c8cbd0"></div>
<div class="a" style="left:0;top:227px;width:44.500px;height:4px;background:#bdbdbd"></div>
<div class="a" style="left:124.700px;top:208px;width:4.600px;height:23.500px;background:#adadad"></div>
<div class="a" style="left:124.700px;top:231.500px;width:4.600px;height:470px;background:#dde2eb"></div>
<div class="a" style="left:129.3px;top:231.700px;width:265.1px;height:26.800px;background:#333"></div>
<div class="a" style="left:394.4px;top:231.700px;width:230.2px;height:26.800px;background:#535353;border-top:1px solid #484848;border-bottom:1px solid #484848"></div>
<div class="a" style="left:624.6px;top:231.700px;width:504.9px;height:26.800px;background:#333"></div>
<div class="t band" style="left:129.3px;width:265.1px">Revenue</div>
<div class="t band" style="left:394.4px;width:230.2px">Users</div>
<div class="t band" style="left:838px;width:200px">Customers</div>
<div class="t colh" style="left:44.5px;width:80.2px">A</div>
<div class="t colh" style="left:129.3px;width:98.3px">B</div>
<div class="t colh" style="left:227.6px;width:68.2px">C</div>
<div class="t colh" style="left:295.8px;width:98.6px">D</div>
<div class="t colh" style="left:394.4px;width:88.4px">E</div>
<div class="t colh" style="left:482.8px;width:74.6px">F</div>
<div class="t colh" style="left:557.4px;width:67.2px">G</div>
<div class="t colh" style="left:624.6px;width:79.9px">H</div>
<div class="t colh" style="left:704.5px;width:82.0px">I</div>
<div class="t colh" style="left:786.5px;width:82.5px">J</div>
<div class="t colh" style="left:869px;width:101.0px">M</div>
<div class="t colh" style="left:970px;width:103.8px">N</div>
<div class="t colh" style="left:1113px;width:20px">O</div>
<svg style="left:859.500px;top:216px" width="5" height="8" viewBox="0 0 5 8"><path d="M5 0v8L0 4z" fill="#202124"/></svg>
<svg style="left:873.500px;top:216px" width="5" height="8" viewBox="0 0 5 8"><path d="M0 0v8l5-4z" fill="#202124"/></svg>
<div class="t rowh" style="top:239.40px">1</div>
<div class="t rowh" style="top:278.65px">2</div>
<div class="t rowh" style="top:315.00px">3</div>
<div class="t rowh" style="top:335.79px">4</div>
<div class="t rowh" style="top:356.37px">5</div>
<div class="t rowh" style="top:376.95px">6</div>
<div class="t rowh" style="top:397.53px">7</div>
<div class="t rowh" style="top:418.11px">8</div>
<div class="t rowh" style="top:438.69px">9</div>
<div class="t rowh" style="top:459.27px">10</div>
<div class="t rowh" style="top:479.85px">11</div>
<div class="t rowh" style="top:500.43px">12</div>
<div class="t rowh" style="top:521.01px">13</div>
<div class="t rowh" style="top:541.59px">14</div>
<div class="t rowh" style="top:562.17px">15</div>
<div class="t rowh" style="top:582.75px">16</div>
<div class="t rowh" style="top:603.33px">17</div>
<div class="t rowh" style="top:623.91px">18</div>
<div class="t rowh" style="top:644.49px">19</div>
<div class="t rowh" style="top:665.07px">20</div>
<div class="t hd" style="left:48.0px;top:293.4px;width:76.7px;overflow:hidden">Months</div>
<div class="t hd" style="left:132.9px;top:277.8px;width:94.7px;overflow:hidden">Revenue</div>
<div class="t hd" style="left:132.9px;top:293.4px;width:94.7px;overflow:hidden">(MoM)</div>
<div class="t hd" style="left:231.2px;top:277.8px;width:64.6px;overflow:hidden">Revenue</div>
<div class="t hd" style="left:231.2px;top:293.4px;width:64.6px;overflow:hidden">Growth</div>
<div class="t hd" style="left:299.4px;top:277.8px;width:95.0px;overflow:hidden">Revenue</div>
<div class="t hd" style="left:299.4px;top:293.4px;width:95.0px;overflow:hidden">(accrued)</div>
<div class="t hd" style="left:398.0px;top:277.8px;width:84.8px;overflow:hidden">Reg Users</div>
<div class="t hd" style="left:398.0px;top:293.4px;width:84.8px;overflow:hidden">(MoM)</div>
<div class="t hd" style="left:486.4px;top:277.8px;width:71.0px;overflow:hidden">Reg Users</div>
<div class="t hd" style="left:486.4px;top:293.4px;width:71.0px;overflow:hidden">(accrued)</div>
<div class="t hd" style="left:561.0px;top:277.8px;width:63.6px;overflow:hidden">Reg User</div>
<div class="t hd" style="left:561.0px;top:293.4px;width:63.6px;overflow:hidden">Growth</div>
<div class="t hd" style="left:628.2px;top:277.8px;width:76.3px;overflow:hidden">Customers</div>
<div class="t hd" style="left:628.2px;top:293.4px;width:76.3px;overflow:hidden">(MoM)</div>
<div class="t hd" style="left:708.1px;top:277.8px;width:78.4px;overflow:hidden">Customers</div>
<div class="t hd" style="left:708.1px;top:293.4px;width:78.4px;overflow:hidden">(accrued)</div>
<div class="t hd" style="left:790.1px;top:277.8px;width:78.9px;overflow:hidden">Customer</div>
<div class="t hd" style="left:790.1px;top:293.4px;width:78.9px;overflow:hidden">Growth</div>
<div class="t hd" style="left:872.6px;top:277.8px;width:97.4px;overflow:hidden">Subscriptions</div>
<div class="t hd" style="left:872.6px;top:293.4px;width:97.4px;overflow:hidden">(MoM)</div>
<div class="t hd" style="left:973.6px;top:277.8px;width:100.2px;overflow:hidden">Event Licenses</div>
<div class="t hd" style="left:973.6px;top:293.4px;width:100.2px;overflow:hidden">(MoM)</div>
<div class="t hd" style="left:1077.4px;top:277.8px;width:52.1px;overflow:hidden">Cancella</div>
<div class="t hd" style="left:1077.4px;top:293.4px;width:52.1px;overflow:hidden">(MoM)</div>
<div class="t mo" style="top:314.20px">2022-01</div>
<div class="t mo" style="top:334.78px">2022-02</div>
<div class="t mo" style="top:355.36px">2022-03</div>
<div class="t mo" style="top:375.94px">2022-04</div>
<div class="t mo" style="top:396.52px">2022-05</div>
<div class="t mo" style="top:417.10px">2022-06</div>
<div class="t mo" style="top:437.68px">2022-07</div>
<div class="t mo" style="top:458.26px">2022-08</div>
<div class="t mo" style="top:478.84px">2022-09</div>
<div class="t mo" style="top:499.42px">2022-10</div>
<div class="t mo" style="top:520.00px">2022-11</div>
<div class="t mo" style="top:540.58px">2022-12</div>
<div class="t mo" style="top:561.16px">2023-01</div>
<div class="t mo" style="top:581.74px">2023-02</div>
<div class="t mo" style="top:602.32px">2023-03</div>
<div class="t mo" style="top:622.90px">2023-04</div>
<div class="t mo" style="top:643.48px">2023-05</div>
<div class="t mo" style="top:664.06px">2023-06</div>
<div class="t pc" style="left:227.6px;width:63.4px;top:314.10px">0.00%</div>
<div class="t pc" style="left:227.6px;width:63.4px;top:334.68px">45.27%</div>
<div class="t pc" style="left:227.6px;width:63.4px;top:355.26px">84.16%</div>
<div class="t pc" style="left:227.6px;width:63.4px;top:375.84px">-19.15%</div>
<div class="t pc" style="left:227.6px;width:63.4px;top:396.42px">40.27%</div>
<div class="t pc" style="left:227.6px;width:63.4px;top:417.00px">19.61%</div>
<div class="t pc" style="left:227.6px;width:63.4px;top:437.58px">-40.55%</div>
<div class="t pc" style="left:227.6px;width:63.4px;top:458.16px">109.45%</div>
<div class="t pc" style="left:227.6px;width:63.4px;top:478.74px">29.69%</div>
<div class="t pc" style="left:227.6px;width:63.4px;top:499.32px">38.13%</div>
<div class="t pc" style="left:227.6px;width:63.4px;top:519.90px">-11.54%</div>
<div class="t pc" style="left:227.6px;width:63.4px;top:540.48px">-37.63%</div>
<div class="t pc" style="left:227.6px;width:63.4px;top:561.06px">49.99%</div>
<div class="t pc" style="left:227.6px;width:63.4px;top:581.64px">8.19%</div>
<div class="t pc" style="left:557.4px;width:62.4px;top:314.10px">0.00%</div>
<div class="t pc" style="left:557.4px;width:62.4px;top:334.68px">20.83%</div>
<div class="t pc" style="left:557.4px;width:62.4px;top:355.26px">29.83%</div>
<div class="t pc" style="left:557.4px;width:62.4px;top:375.84px">28.95%</div>
<div class="t pc" style="left:557.4px;width:62.4px;top:396.42px">25.95%</div>
<div class="t pc" style="left:557.4px;width:62.4px;top:417.00px">30.17%</div>
<div class="t pc" style="left:557.4px;width:62.4px;top:437.58px">8.79%</div>
<div class="t pc" style="left:557.4px;width:62.4px;top:458.16px">13.57%</div>
<div class="t pc" style="left:557.4px;width:62.4px;top:478.74px">16.52%</div>
<div class="t pc" style="left:557.4px;width:62.4px;top:499.32px">16.14%</div>
<div class="t pc" style="left:557.4px;width:62.4px;top:519.90px">14.99%</div>
<div class="t pc" style="left:557.4px;width:62.4px;top:540.48px">8.76%</div>
<div class="t pc" style="left:557.4px;width:62.4px;top:561.06px">13.49%</div>
<div class="t pc" style="left:557.4px;width:62.4px;top:581.64px">10.35%</div>
<div class="t pc" style="left:786.5px;width:77.7px;top:314.10px">0.00%</div>
<div class="t pc" style="left:786.5px;width:77.7px;top:334.68px">26.09%</div>
<div class="t pc" style="left:786.5px;width:77.7px;top:355.26px">31.03%</div>
<div class="t pc" style="left:786.5px;width:77.7px;top:375.84px">29.82%</div>
<div class="t pc" style="left:786.5px;width:77.7px;top:396.42px">29.73%</div>
<div class="t pc" style="left:786.5px;width:77.7px;top:417.00px">29.17%</div>
<div class="t pc" style="left:786.5px;width:77.7px;top:437.58px">6.25%</div>
<div class="t pc" style="left:786.5px;width:77.7px;top:458.16px">12.14%</div>
<div class="t pc" style="left:786.5px;width:77.7px;top:478.74px">17.77%</div>
<div class="t pc" style="left:786.5px;width:77.7px;top:499.32px">18.10%</div>
<div class="t pc" style="left:786.5px;width:77.7px;top:519.90px">12.53%</div>
<div class="t pc" style="left:786.5px;width:77.7px;top:540.48px">6.05%</div>
<div class="t pc" style="left:786.5px;width:77.7px;top:561.06px">10.81%</div>
<div class="t pc" style="left:786.5px;width:77.7px;top:581.64px">8.65%</div>
<div class="a" style="left:44.5px;top:556.63px;width:80.2px;height:1.300px;background:#1a1a1a"></div>
<div class="a" style="left:129.3px;top:556.63px;width:27.7px;height:1.300px;background:#1a1a1a"></div>
<div class="a" style="left:228.0px;top:556.63px;width:68.0px;height:1.300px;background:#1a1a1a"></div>
<div class="a" style="left:296.0px;top:556.63px;width:19.0px;height:1.300px;background:#1a1a1a"></div>
<div class="a" style="left:394.3px;top:556.63px;width:48.7px;height:1.300px;background:#1a1a1a"></div>
<div class="a" style="left:483.0px;top:556.63px;width:28.0px;height:1.300px;background:#1a1a1a"></div>
<div class="a" style="left:558.0px;top:556.63px;width:67.0px;height:1.300px;background:#1a1a1a"></div>
<div class="a" style="left:625.0px;top:556.63px;width:44.0px;height:1.300px;background:#1a1a1a"></div>
<div class="a" style="left:704.5px;top:556.63px;width:35.5px;height:1.300px;background:#1a1a1a"></div>
<div class="a" style="left:787.0px;top:556.63px;width:82.0px;height:1.300px;background:#1a1a1a"></div>
<div class="a" style="left:869.0px;top:556.63px;width:71.0px;height:1.300px;background:#1a1a1a"></div>
<div class="a" style="left:970.0px;top:556.63px;width:73.0px;height:1.300px;background:#1a1a1a"></div>
<div class="a" style="left:1073.8px;top:556.63px;width:55.7px;height:1.300px;background:#1a1a1a"></div>
<div class="a" style="left:226.6px;top:330.00px;width:69.7px;height:22.08px;border:2px solid #1a73e8"></div>
<div class="a" style="left:292.3px;top:348.08px;width:7px;height:7px;background:#1a73e8;border:1px solid #fff"></div>
<!-- ===== mosaic blobs ===== --><style>#bl i{position:absolute;display:block}</style><div id="bl">
<i style="left:157px;top:311px;width:70.1px;height:287px;background:#fff"></i>
<i style="left:315px;top:311px;width:78.8px;height:287px;background:#fff"></i>
<i style="left:444px;top:311px;width:37.8px;height:287px;background:#fff"></i>
<i style="left:512px;top:311px;width:44.4px;height:287px;background:#fff"></i>
<i style="left:670.6px;top:311px;width:33.2px;height:287px;background:#fff"></i>
<i style="left:740px;top:311px;width:45.6px;height:287px;background:#fff"></i>
<i style="left:940px;top:311px;width:29.0px;height:287px;background:#fff"></i>
<i style="left:1045.5px;top:311px;width:27.8px;height:287px;background:#fff"></i>
<i style="left:157px;top:370px;width:70.6px;height:2.8px;background:#e2e3e4"></i>
<i style="left:157px;top:453px;width:70.6px;height:2.8px;background:#e2e3e4"></i>
<i style="left:157px;top:536px;width:70.6px;height:2.8px;background:#e2e3e4"></i>
<i style="left:315px;top:350.4px;width:79.0px;height:2.8px;background:#e2e3e4"></i>
<i style="left:315px;top:432.5px;width:79.0px;height:3.1px;background:#e2e3e4"></i>
<i style="left:315px;top:515px;width:79.0px;height:3.4px;background:#e2e3e4"></i>
<i style="left:315px;top:597.3px;width:79.0px;height:1.6px;background:#e2e3e4"></i>
<i style="left:511.7px;top:349.2px;width:44.7px;height:3.4px;background:#e2e3e4"></i>
<i style="left:511.7px;top:432.2px;width:44.7px;height:3.6px;background:#e2e3e4"></i>
<i style="left:511.7px;top:515.8px;width:44.7px;height:3.2px;background:#e2e3e4"></i>
<i style="left:670.6px;top:329px;width:33.9px;height:3.4px;background:#e2e3e4"></i>
<i style="left:670.6px;top:411.8px;width:33.9px;height:3.4px;background:#e2e3e4"></i>
<i style="left:670.6px;top:494.5px;width:33.9px;height:3.3px;background:#e2e3e4"></i>
<i style="left:670.6px;top:577.8px;width:33.9px;height:3.2px;background:#e2e3e4"></i>
<i style="left:670.6px;top:348.5px;width:33.9px;height:2.9px;background:#ececec"></i>
<i style="left:670.6px;top:431.5px;width:33.9px;height:3.2px;background:#ececec"></i>
<i style="left:670.6px;top:514.5px;width:33.9px;height:3.3px;background:#ececec"></i>
<i style="left:939.8px;top:348.4px;width:28.7px;height:4.1px;background:#e2e3e4"></i>
<i style="left:939.8px;top:410.5px;width:28.7px;height:4.0px;background:#e2e3e4"></i>
<i style="left:939.8px;top:472px;width:28.7px;height:4.0px;background:#e2e3e4"></i>
<i style="left:939.8px;top:534.2px;width:28.7px;height:4.0px;background:#e2e3e4"></i>
<i style="left:1045.6px;top:370.2px;width:26.9px;height:3.8px;background:#e2e3e4"></i>
<i style="left:1045.6px;top:432.3px;width:26.9px;height:3.7px;background:#e2e3e4"></i>
<i style="left:1045.6px;top:494.1px;width:26.9px;height:3.9px;background:#e2e3e4"></i>
<i style="left:1045.6px;top:555.2px;width:27.2px;height:4.6px;background:#0a0a0a"></i>
<i style="left:168.9px;top:314.7px;width:4.07px;height:4.07px;background:#0a0a0a"></i>
<i style="left:176.8px;top:314.7px;width:4.07px;height:4.07px;background:#8e8e8e"></i>
<i style="left:192.4px;top:314.7px;width:4.07px;height:4.07px;background:#0a0a0a"></i>
<i style="left:200.3px;top:314.7px;width:4.07px;height:4.07px;background:#0a0a0a"></i>
<i style="left:212.0px;top:314.7px;width:4.07px;height:4.07px;background:#0a0a0a"></i>
<i style="left:219.9px;top:314.7px;width:4.07px;height:4.07px;background:#0a0a0a"></i>
<i style="left:165.0px;top:318.6px;width:4.07px;height:4.07px;background:#4a4a4a"></i>
<i style="left:176.8px;top:318.6px;width:4.07px;height:4.07px;background:#8e8e8e"></i>
<i style="left:196.4px;top:318.6px;width:4.07px;height:4.07px;background:#0a0a0a"></i>
<i style="left:200.3px;top:318.6px;width:4.07px;height:4.07px;background:#0a0a0a"></i>
<i style="left:219.9px;top:318.6px;width:4.07px;height:4.07px;background:#0a0a0a"></i>
<i style="left:168.9px;top:322.5px;width:4.07px;height:4.07px;background:#0a0a0a"></i>
<i style="left:176.8px;top:322.5px;width:4.07px;height:4.07px;background:#8e8e8e"></i>
<i style="left:180.7px;top:322.5px;width:4.07px;height:4.07px;background:#0a0a0a"></i>
<i style="left:192.4px;top:322.5px;width:4.07px;height:4.07px;background:#0a0a0a"></i>
<i style="left:200.3px;top:322.5px;width:4.07px;height:4.07px;background:#0a0a0a"></i>
<i style="left:212.0px;top:322.5px;width:4.07px;height:4.07px;background:#0a0a0a"></i>
<i style="left:219.9px;top:322.5px;width:4.07px;height:4.07px;background:#0a0a0a"></i>
<i style="left:168.9px;top:334.0px;width:4.07px;height:4.07px;background:#4a4a4a"></i>
<i style="left:176.8px;top:334.0px;width:4.07px;height:4.07px;background:#dadada"></i>
<i style="left:200.3px;top:334.0px;width:4.07px;height:4.07px;background:#8e8e8e"></i>
<i style="left:212.0px;top:334.0px;width:4.07px;height:4.07px;background:#8e8e8e"></i>
<i style="left:219.9px;top:334.0px;width:4.07px;height:4.07px;background:#dadada"></i>
<i style="left:165.0px;top:337.9px;width:4.07px;height:4.07px;background:#0a0a0a"></i>
<i style="left:168.9px;top:337.9px;width:4.07px;height:4.07px;background:#0a0a0a"></i>
<i style="left:176.8px;top:337.9px;width:4.07px;height:4.07px;background:#8e8e8e"></i>
<i style="left:184.6px;top:337.9px;width:4.07px;height:4.07px;background:#dadada"></i>
<i style="left:216.0px;top:337.9px;width:4.07px;height:4.07px;background:#8e8e8e"></i>
<i style="left:219.9px;top:337.9px;width:4.07px;height:4.07px;background:#0a0a0a"></i>
<i style="left:176.8px;top:341.8px;width:4.07px;height:4.07px;background:#8e8e8e"></i>
<i style="left:184.6px;top:341.8px;width:4.07px;height:4.07px;background:#0a0a0a"></i>
<i style="left:188.5px;top:341.8px;width:4.07px;height:4.07px;background:#0a0a0a"></i>
<i style="left:216.0px;top:341.8px;width:4.07px;height:4.07px;background:#4a4a4a"></i>
<i style="left:165.0px;top:357.6px;width:4.07px;height:4.07px;background:#dadada"></i>
<i style="left:172.8px;top:357.6px;width:4.07px;height:4.07px;background:#8e8e8e"></i>
<i style="left:176.8px;top:357.6px;width:4.07px;height:4.07px;background:#dadada"></i>
<i style="left:184.6px;top:357.6px;width:4.07px;height:4.07px;background:#dadada"></i>
<i style="left:188.5px;top:357.6px;width:4.07px;height:4.07px;background:#0a0a0a"></i>
<i style="left:212.0px;top:357.6px;width:4.07px;height:4.07px;background:#4a4a4a"></i>
<i style="left:219.9px;top:357.6px;width:4.07px;height:4.07px;background:#0a0a0a"></i>
<i style="left:188.5px;top:361.5px;width:4.07px;height:4.07px;background:#0a0a0a"></i>
<i style="left:196.4px;top:361.5px;width:4.07px;height:4.07px;background:#0a0a0a"></i>
<i style="left:219.9px;top:361.5px;width:4.07px;height:4.07px;background:#0a0a0a"></i>
<i style="left:180.7px;top:365.4px;width:4.07px;height:4.07px;background:#0a0a0a"></i>
<i style="left:172.8px;top:377.2px;width:4.07px;height:4.07px;background:#0a0a0a"></i>
<i style="left:176.8px;top:377.2px;width:4.07px;height:4.07px;background:#8e8e8e"></i>
<i style="left:184.6px;top:377.2px;width:4.07px;height:4.07px;background:#4a4a4a"></i>
<i style="left:188.5px;top:377.2px;width:4.07px;height:4.07px;background:#0a0a0a"></i>
<i style="left:196.4px;top:377.2px;width:4.07px;height:4.07px;background:#8e8e8e"></i>
<i style="left:219.9px;top:377.2px;width:4.07px;height:4.07px;background:#0a0a0a"></i>
<i style="left:165.0px;top:381.1px;width:4.07px;height:4.07px;background:#0a0a0a"></i>
<i style="left:168.9px;top:381.1px;width:4.07px;height:4.07px;background:#0a0a0a"></i>
<i style="left:176.8px;top:381.1px;width:4.07px;height:4.07px;background:#dadada"></i>
<i style="left:188.5px;top:381.1px;width:4.07px;height:4.07px;background:#0a0a0a"></i>
<i style="left:192.4px;top:381.1px;width:4.07px;height:4.07px;background:#0a0a0a"></i>
<i style="left:196.4px;top:381.1px;width:4.07px;height:4.07px;background:#0a0a0a"></i>
<i style="left:212.0px;top:381.1px;width:4.07px;height:4.07px;background:#8e8e8e"></i>
<i style="left:219.9px;top:381.1px;width:4.07px;height:4.07px;background:#0a0a0a"></i>
<i style="left:168.9px;top:385.0px;width:4.07px;height:4.07px;background:#dadada"></i>
<i style="left:180.7px;top:385.0px;width:4.07px;height:4.07px;background:#4a4a4a"></i>
<i style="left:192.4px;top:385.0px;width:4.07px;height:4.07px;background:#dadada"></i>
<i style="left:200.3px;top:385.0px;width:4.07px;height:4.07px;background:#dadada"></i>
<i style="left:168.9px;top:397.5px;width:4.07px;height:4.07px;background:#0a0a0a"></i>
<i style="left:176.8px;top:397.5px;width:4.07px;height:4.07px;background:#0a0a0a"></i>
<i style="left:184.6px;top:397.5px;width:4.07px;height:4.07px;background:#0a0a0a"></i>
<i style="left:192.4px;top:397.5px;width:4.07px;height:4.07px;background:#0a0a0a"></i>
<i style="left:212.0px;top:397.5px;width:4.07px;height:4.07px;background:#0a0a0a"></i>
<i style="left:216.0px;top:397.5px;width:4.07px;height:4.07px;background:#0a0a0a"></i>
<i style="left:219.9px;top:397.5px;width:4.07px;height:4.07px;background:#0a0a0a"></i>
<i style="left:165.0px;top:401.4px;width:4.07px;height:4.07px;background:#4a4a4a"></i>
<i style="left:176.8px;top:401.4px;width:4.07px;height:4.07px;background:#0a0a0a"></i>
<i style="left:188.5px;top:401.4px;width:4.07px;height:4.07px;background:#8e8e8e"></i>
<i style="left:192.4px;top:401.4px;width:4.07px;height:4.07px;background:#4a4a4a"></i>
<i style="left:196.4px;top:401.4px;width:4.07px;height:4.07px;background:#dadada"></i>
<i style="left:219.9px;top:401.4px;width:4.07px;height:4.07px;background:#dadada"></i>
<i style="left:168.9px;top:405.3px;width:4.07px;height:4.07px;background:#0a0a0a"></i>
<i style="left:176.8px;top:405.3px;width:4.07px;height:4.07px;background:#0a0a0a"></i>
<i style="left:180.7px;top:405.3px;width:4.07px;height:4.07px;background:#0a0a0a"></i>
<i style="left:184.6px;top:405.3px;width:4.07px;height:4.07px;background:#0a0a0a"></i>
<i style="left:188.5px;top:405.3px;width:4.07px;height:4.07px;background:#4a4a4a"></i>
<i style="left:192.4px;top:405.3px;width:4.07px;height:4.07px;background:#0a0a0a"></i>
<i style="left:212.0px;top:405.3px;width:4.07px;height:4.07px;background:#0a0a0a"></i>
<i style="left:168.9px;top:417.0px;width:4.07px;height:4.07px;background:#4a4a4a"></i>
<i style="left:176.8px;top:417.0px;width:4.07px;height:4.07px;background:#8e8e8e"></i>
<i style="left:192.4px;top:417.0px;width:4.07px;height:4.07px;background:#dadada"></i>
<i style="left:212.0px;top:417.0px;width:4.07px;height:4.07px;background:#dadada"></i>
<i style="left:165.0px;top:420.9px;width:4.07px;height:4.07px;background:#0a0a0a"></i>
<i style="left:168.9px;top:420.9px;width:4.07px;height:4.07px;background:#0a0a0a"></i>
<i style="left:176.8px;top:420.9px;width:4.07px;height:4.07px;background:#0a0a0a"></i>
<i style="left:188.5px;top:420.9px;width:4.07px;height:4.07px;background:#0a0a0a"></i>
<i style="left:196.4px;top:420.9px;width:4.07px;height:4.07px;background:#dadada"></i>
<i style="left:200.3px;top:420.9px;width:4.07px;height:4.07px;background:#dadada"></i>
<i style="left:212.0px;top:420.9px;width:4.07px;height:4.07px;background:#0a0a0a"></i>
<i style="left:219.9px;top:420.9px;width:4.07px;height:4.07px;background:#0a0a0a"></i>
<i style="left:176.8px;top:424.8px;width:4.07px;height:4.07px;background:#0a0a0a"></i>
<i style="left:184.6px;top:424.8px;width:4.07px;height:4.07px;background:#0a0a0a"></i>
<i style="left:188.5px;top:424.8px;width:4.07px;height:4.07px;background:#0a0a0a"></i>
<i style="left:192.4px;top:424.8px;width:4.07px;height:4.07px;background:#8e8e8e"></i>
<i style="left:216.0px;top:424.8px;width:4.07px;height:4.07px;background:#4a4a4a"></i>
<i style="left:165.0px;top:440.6px;width:4.07px;height:4.07px;background:#dadada"></i>
<i style="left:172.8px;top:440.6px;width:4.07px;height:4.07px;background:#8e8e8e"></i>
<i style="left:176.8px;top:440.6px;width:4.07px;height:4.07px;background:#dadada"></i>
<i style="left:188.5px;top:440.6px;width:4.07px;height:4.07px;background:#0a0a0a"></i>
<i style="left:196.4px;top:440.6px;width:4.07px;height:4.07px;background:#4a4a4a"></i>
<i style="left:188.5px;top:444.5px;width:4.07px;height:4.07px;background:#0a0a0a"></i>
<i style="left:196.4px;top:444.5px;width:4.07px;height:4.07px;background:#4a4a4a"></i>
<i style="left:200.3px;top:444.5px;width:4.07px;height:4.07px;background:#0a0a0a"></i>
<i style="left:216.0px;top:444.5px;width:4.07px;height:4.07px;background:#8e8e8e"></i>
<i style="left:180.7px;top:448.4px;width:4.07px;height:4.07px;background:#0a0a0a"></i>
<i style="left:172.8px;top:460.2px;width:4.07px;height:4.07px;background:#dadada"></i>
<i style="left:184.6px;top:460.2px;width:4.07px;height:4.07px;background:#0a0a0a"></i>
<i style="left:188.5px;top:460.2px;width:4.07px;height:4.07px;background:#0a0a0a"></i>
<i style="left:192.4px;top:460.2px;width:4.07px;height:4.07px;background:#0a0a0a"></i>
<i style="left:165.0px;top:464.1px;width:4.07px;height:4.07px;background:#0a0a0a"></i>
<i style="left:168.9px;top:464.1px;width:4.07px;height:4.07px;background:#0a0a0a"></i>
<i style="left:188.5px;top:464.1px;width:4.07px;height:4.07px;background:#0a0a0a"></i>
<i style="left:168.9px;top:468.0px;width:4.07px;height:4.07px;background:#dadada"></i>
<i style="left:180.7px;top:468.0px;width:4.07px;height:4.07px;background:#4a4a4a"></i>
<i style="left:200.3px;top:468.0px;width:4.07px;height:4.07px;background:#dadada"></i>
<i style="left:212.0px;top:468.0px;width:4.07px;height:4.07px;background:#dadada"></i>
<i style="left:168.9px;top:480.5px;width:4.07px;height:4.07px;background:#0a0a0a"></i>
<i style="left:176.8px;top:480.5px;width:4.07px;height:4.07px;background:#0a0a0a"></i>
<i style="left:192.4px;top:480.5px;width:4.07px;height:4.07px;background:#0a0a0a"></i>
<i style="left:200.3px;top:480.5px;width:4.07px;height:4.07px;background:#0a0a0a"></i>
<i style="left:212.0px;top:480.5px;width:4.07px;height:4.07px;background:#0a0a0a"></i>
<i style="left:219.9px;top:480.5px;width:4.07px;height:4.07px;background:#0a0a0a"></i>
<i style="left:165.0px;top:484.4px;width:4.07px;height:4.07px;background:#4a4a4a"></i>
<i style="left:172.8px;top:484.4px;width:4.07px;height:4.07px;background:#0a0a0a"></i>
<i style="left:176.8px;top:484.4px;width:4.07px;height:4.07px;background:#0a0a0a"></i>
<i style="left:184.6px;top:484.4px;width:4.07px;height:4.07px;background:#0a0a0a"></i>
<i style="left:192.4px;top:484.4px;width:4.07px;height:4.07px;background:#4a4a4a"></i>
<i style="left:196.4px;top:484.4px;width:4.07px;height:4.07px;background:#0a0a0a"></i>
<i style="left:200.3px;top:484.4px;width:4.07px;height:4.07px;background:#0a0a0a"></i>
<i style="left:216.0px;top:484.4px;width:4.07px;height:4.07px;background:#8e8e8e"></i>
<i style="left:219.9px;top:484.4px;width:4.07px;height:4.07px;background:#4a4a4a"></i>
<i style="left:168.9px;top:488.3px;width:4.07px;height:4.07px;background:#0a0a0a"></i>
<i style="left:176.8px;top:488.3px;width:4.07px;height:4.07px;background:#0a0a0a"></i>
<i style="left:180.7px;top:488.3px;width:4.07px;height:4.07px;background:#0a0a0a"></i>
<i style="left:192.4px;top:488.3px;width:4.07px;height:4.07px;background:#0a0a0a"></i>
<i style="left:200.3px;top:488.3px;width:4.07px;height:4.07px;background:#0a0a0a"></i>
<i style="left:212.0px;top:488.3px;width:4.07px;height:4.07px;background:#0a0a0a"></i>
<i style="left:219.9px;top:488.3px;width:4.07px;height:4.07px;background:#0a0a0a"></i>
<i style="left:168.9px;top:500.0px;width:4.07px;height:4.07px;background:#4a4a4a"></i>
<i style="left:192.4px;top:500.0px;width:4.07px;height:4.07px;background:#dadada"></i>
<i style="left:196.4px;top:500.0px;width:4.07px;height:4.07px;background:#dadada"></i>
<i style="left:200.3px;top:500.0px;width:4.07px;height:4.07px;background:#8e8e8e"></i>
<i style="left:212.0px;top:500.0px;width:4.07px;height:4.07px;background:#dadada"></i>
<i style="left:219.9px;top:500.0px;width:4.07px;height:4.07px;background:#dadada"></i>
<i style="left:165.0px;top:503.9px;width:4.07px;height:4.07px;background:#0a0a0a"></i>
<i style="left:168.9px;top:503.9px;width:4.07px;height:4.07px;background:#0a0a0a"></i>
<i style="left:176.8px;top:503.9px;width:4.07px;height:4.07px;background:#0a0a0a"></i>
<i style="left:188.5px;top:503.9px;width:4.07px;height:4.07px;background:#0a0a0a"></i>
<i style="left:200.3px;top:503.9px;width:4.07px;height:4.07px;background:#0a0a0a"></i>
<i style="left:212.0px;top:503.9px;width:4.07px;height:4.07px;background:#0a0a0a"></i>
<i style="left:219.9px;top:503.9px;width:4.07px;height:4.07px;background:#8e8e8e"></i>
<i style="left:172.8px;top:507.8px;width:4.07px;height:4.07px;background:#0a0a0a"></i>
<i style="left:176.8px;top:507.8px;width:4.07px;height:4.07px;background:#8e8e8e"></i>
<i style="left:184.6px;top:507.8px;width:4.07px;height:4.07px;background:#4a4a4a"></i>
<i style="left:188.5px;top:507.8px;width:4.07px;height:4.07px;background:#0a0a0a"></i>
<i style="left:192.4px;top:507.8px;width:4.07px;height:4.07px;background:#0a0a0a"></i>
<i style="left:216.0px;top:507.8px;width:4.07px;height:4.07px;background:#dadada"></i>
<i style="left:165.0px;top:523.6px;width:4.07px;height:4.07px;background:#dadada"></i>
<i style="left:176.8px;top:523.6px;width:4.07px;height:4.07px;background:#0a0a0a"></i>
<i style="left:188.5px;top:523.6px;width:4.07px;height:4.07px;background:#0a0a0a"></i>
<i style="left:192.4px;top:523.6px;width:4.07px;height:4.07px;background:#4a4a4a"></i>
<i style="left:219.9px;top:523.6px;width:4.07px;height:4.07px;background:#0a0a0a"></i>
<i style="left:188.5px;top:527.5px;width:4.07px;height:4.07px;background:#0a0a0a"></i>
<i style="left:192.4px;top:527.5px;width:4.07px;height:4.07px;background:#0a0a0a"></i>
<i style="left:196.4px;top:527.5px;width:4.07px;height:4.07px;background:#0a0a0a"></i>
<i style="left:180.7px;top:531.4px;width:4.07px;height:4.07px;background:#0a0a0a"></i>
<i style="left:176.8px;top:543.2px;width:4.07px;height:4.07px;background:#0a0a0a"></i>
<i style="left:184.6px;top:543.2px;width:4.07px;height:4.07px;background:#0a0a0a"></i>
<i style="left:188.5px;top:543.2px;width:4.07px;height:4.07px;background:#4a4a4a"></i>
<i style="left:192.4px;top:543.2px;width:4.07px;height:4.07px;background:#8e8e8e"></i>
<i style="left:165.0px;top:547.1px;width:4.07px;height:4.07px;background:#0a0a0a"></i>
<i style="left:168.9px;top:547.1px;width:4.07px;height:4.07px;background:#0a0a0a"></i>
<i style="left:172.8px;top:547.1px;width:4.07px;height:4.07px;background:#0a0a0a"></i>
<i style="left:176.8px;top:547.1px;width:4.07px;height:4.07px;background:#0a0a0a"></i>
<i style="left:184.6px;top:547.1px;width:4.07px;height:4.07px;background:#0a0a0a"></i>
<i style="left:188.5px;top:547.1px;width:4.07px;height:4.07px;background:#0a0a0a"></i>
<i style="left:196.4px;top:547.1px;width:4.07px;height:4.07px;background:#0a0a0a"></i>
<i style="left:200.3px;top:547.1px;width:4.07px;height:4.07px;background:#0a0a0a"></i>
<i style="left:212.0px;top:547.1px;width:4.07px;height:4.07px;background:#0a0a0a"></i>
<i style="left:168.9px;top:551.0px;width:4.07px;height:4.07px;background:#dadada"></i>
<i style="left:180.7px;top:551.0px;width:4.07px;height:4.07px;background:#4a4a4a"></i>
<i style="left:212.0px;top:551.0px;width:4.07px;height:4.07px;background:#dadada"></i>
<i style="left:168.9px;top:563.0px;width:4.07px;height:4.07px;background:#0a0a0a"></i>
<i style="left:172.8px;top:563.0px;width:4.07px;height:4.07px;background:#0a0a0a"></i>
<i style="left:176.8px;top:563.0px;width:4.07px;height:4.07px;background:#0a0a0a"></i>
<i style="left:192.4px;top:563.0px;width:4.07px;height:4.07px;background:#0a0a0a"></i>
<i style="left:200.3px;top:563.0px;width:4.07px;height:4.07px;background:#0a0a0a"></i>
<i style="left:212.0px;top:563.0px;width:4.07px;height:4.07px;background:#0a0a0a"></i>
<i style="left:219.9px;top:563.0px;width:4.07px;height:4.07px;background:#0a0a0a"></i>
<i style="left:165.0px;top:566.9px;width:4.07px;height:4.07px;background:#8e8e8e"></i>
<i style="left:184.6px;top:566.9px;width:4.07px;height:4.07px;background:#0a0a0a"></i>
<i style="left:200.3px;top:566.9px;width:4.07px;height:4.07px;background:#0a0a0a"></i>
<i style="left:212.0px;top:566.9px;width:4.07px;height:4.07px;background:#0a0a0a"></i>
<i style="left:219.9px;top:566.9px;width:4.07px;height:4.07px;background:#0a0a0a"></i>
<i style="left:168.9px;top:570.8px;width:4.07px;height:4.07px;background:#0a0a0a"></i>
<i style="left:180.7px;top:570.8px;width:4.07px;height:4.07px;background:#0a0a0a"></i>
<i style="left:192.4px;top:570.8px;width:4.07px;height:4.07px;background:#0a0a0a"></i>
<i style="left:196.4px;top:570.8px;width:4.07px;height:4.07px;background:#0a0a0a"></i>
<i style="left:200.3px;top:570.8px;width:4.07px;height:4.07px;background:#0a0a0a"></i>
<i style="left:212.0px;top:570.8px;width:4.07px;height:4.07px;background:#0a0a0a"></i>
<i style="left:216.0px;top:570.8px;width:4.07px;height:4.07px;background:#0a0a0a"></i>
<i style="left:219.9px;top:570.8px;width:4.07px;height:4.07px;background:#0a0a0a"></i>
<i style="left:168.9px;top:582.7px;width:4.07px;height:4.07px;background:#4a4a4a"></i>
<i style="left:192.4px;top:582.7px;width:4.07px;height:4.07px;background:#dadada"></i>
<i style="left:200.3px;top:582.7px;width:4.07px;height:4.07px;background:#dadada"></i>
<i style="left:212.0px;top:582.7px;width:4.07px;height:4.07px;background:#8e8e8e"></i>
<i style="left:219.9px;top:582.7px;width:4.07px;height:4.07px;background:#dadada"></i>
<i style="left:165.0px;top:586.6px;width:4.07px;height:4.07px;background:#0a0a0a"></i>
<i style="left:168.9px;top:586.6px;width:4.07px;height:4.07px;background:#0a0a0a"></i>
<i style="left:176.8px;top:586.6px;width:4.07px;height:4.07px;background:#0a0a0a"></i>
<i style="left:188.5px;top:586.6px;width:4.07px;height:4.07px;background:#0a0a0a"></i>
<i style="left:200.3px;top:586.6px;width:4.07px;height:4.07px;background:#0a0a0a"></i>
<i style="left:216.0px;top:586.6px;width:4.07px;height:4.07px;background:#dadada"></i>
<i style="left:219.9px;top:586.6px;width:4.07px;height:4.07px;background:#0a0a0a"></i>
<i style="left:172.8px;top:590.5px;width:4.07px;height:4.07px;background:#0a0a0a"></i>
<i style="left:176.8px;top:590.5px;width:4.07px;height:4.07px;background:#8e8e8e"></i>
<i style="left:184.6px;top:590.5px;width:4.07px;height:4.07px;background:#0a0a0a"></i>
<i style="left:188.5px;top:590.5px;width:4.07px;height:4.07px;background:#0a0a0a"></i>
<i style="left:196.4px;top:590.5px;width:4.07px;height:4.07px;background:#4a4a4a"></i>
<i style="left:216.0px;top:590.5px;width:4.07px;height:4.07px;background:#4a4a4a"></i>
<i style="left:334.0px;top:314.7px;width:4.07px;height:4.07px;background:#4a4a4a"></i>
<i style="left:338.0px;top:314.7px;width:4.07px;height:4.07px;background:#0a0a0a"></i>
<i style="left:341.9px;top:314.7px;width:4.07px;height:4.07px;background:#0a0a0a"></i>
<i style="left:353.6px;top:314.7px;width:4.07px;height:4.07px;background:#0a0a0a"></i>
<i style="left:361.5px;top:314.7px;width:4.07px;height:4.07px;background:#0a0a0a"></i>
<i style="left:365.4px;top:314.7px;width:4.07px;height:4.07px;background:#0a0a0a"></i>
<i style="left:369.3px;top:314.7px;width:4.07px;height:4.07px;background:#0a0a0a"></i>
<i style="left:377.2px;top:314.7px;width:4.07px;height:4.07px;background:#0a0a0a"></i>
<i style="left:334.0px;top:318.6px;width:4.07px;height:4.07px;background:#8e8e8e"></i>
<i style="left:341.9px;top:318.6px;width:4.07px;height:4.07px;background:#4a4a4a"></i>
<i style="left:353.6px;top:318.6px;width:4.07px;height:4.07px;background:#0a0a0a"></i>
<i style="left:357.6px;top:318.6px;width:4.07px;height:4.07px;background:#4a4a4a"></i>
<i style="left:361.5px;top:318.6px;width:4.07px;height:4.07px;background:#8e8e8e"></i>
<i style="left:377.2px;top:318.6px;width:4.07px;height:4.07px;background:#0a0a0a"></i>
<i style="left:385.0px;top:318.6px;width:4.07px;height:4.07px;background:#dadada"></i>
<i style="left:334.0px;top:322.5px;width:4.07px;height:4.07px;background:#0a0a0a"></i>
<i style="left:338.0px;top:322.5px;width:4.07px;height:4.07px;background:#4a4a4a"></i>
<i style="left:353.6px;top:322.5px;width:4.07px;height:4.07px;background:#0a0a0a"></i>
<i style="left:357.6px;top:322.5px;width:4.07px;height:4.07px;background:#8e8e8e"></i>
<i style="left:361.5px;top:322.5px;width:4.07px;height:4.07px;background:#0a0a0a"></i>
<i style="left:373.2px;top:322.5px;width:4.07px;height:4.07px;background:#0a0a0a"></i>
<i style="left:377.2px;top:322.5px;width:4.07px;height:4.07px;background:#0a0a0a"></i>
<i style="left:381.1px;top:322.5px;width:4.07px;height:4.07px;background:#0a0a0a"></i>
<i style="left:334.0px;top:338.0px;width:4.07px;height:4.07px;background:#8e8e8e"></i>
<i style="left:338.0px;top:338.0px;width:4.07px;height:4.07px;background:#dadada"></i>
<i style="left:341.9px;top:338.0px;width:4.07px;height:4.07px;background:#8e8e8e"></i>
<i style="left:353.6px;top:338.0px;width:4.07px;height:4.07px;background:#dadada"></i>
<i style="left:357.6px;top:338.0px;width:4.07px;height:4.07px;background:#0a0a0a"></i>
<i style="left:365.4px;top:338.0px;width:4.07px;height:4.07px;background:#0a0a0a"></i>
<i style="left:369.3px;top:338.0px;width:4.07px;height:4.07px;background:#0a0a0a"></i>
<i style="left:388.9px;top:338.0px;width:4.07px;height:4.07px;background:#8e8e8e"></i>
<i style="left:334.0px;top:341.9px;width:4.07px;height:4.07px;background:#8e8e8e"></i>
<i style="left:349.7px;top:341.9px;width:4.07px;height:4.07px;background:#8e8e8e"></i>
<i style="left:357.6px;top:341.9px;width:4.07px;height:4.07px;background:#4a4a4a"></i>
<i style="left:361.5px;top:341.9px;width:4.07px;height:4.07px;background:#8e8e8e"></i>
<i style="left:365.4px;top:341.9px;width:4.07px;height:4.07px;background:#0a0a0a"></i>
<i style="left:369.3px;top:341.9px;width:4.07px;height:4.07px;background:#4a4a4a"></i>
<i style="left:377.2px;top:341.9px;width:4.07px;height:4.07px;background:#4a4a4a"></i>
<i style="left:388.9px;top:341.9px;width:4.07px;height:4.07px;background:#dadada"></i>
<i style="left:334.0px;top:357.6px;width:4.07px;height:4.07px;background:#dadada"></i>
<i style="left:353.6px;top:357.6px;width:4.07px;height:4.07px;background:#4a4a4a"></i>
<i style="left:361.5px;top:357.6px;width:4.07px;height:4.07px;background:#0a0a0a"></i>
<i style="left:365.4px;top:357.6px;width:4.07px;height:4.07px;background:#0a0a0a"></i>
<i style="left:377.2px;top:357.6px;width:4.07px;height:4.07px;background:#4a4a4a"></i>
<i style="left:388.9px;top:357.6px;width:4.07px;height:4.07px;background:#dadada"></i>
<i style="left:341.9px;top:361.5px;width:4.07px;height:4.07px;background:#8e8e8e"></i>
<i style="left:369.3px;top:361.5px;width:4.07px;height:4.07px;background:#4a4a4a"></i>
<i style="left:381.1px;top:361.5px;width:4.07px;height:4.07px;background:#0a0a0a"></i>
<i style="left:388.9px;top:361.5px;width:4.07px;height:4.07px;background:#8e8e8e"></i>
<i style="left:326.2px;top:377.2px;width:4.07px;height:4.07px;background:#0a0a0a"></i>
<i style="left:330.1px;top:377.2px;width:4.07px;height:4.07px;background:#8e8e8e"></i>
<i style="left:334.0px;top:377.2px;width:4.07px;height:4.07px;background:#4a4a4a"></i>
<i style="left:353.6px;top:377.2px;width:4.07px;height:4.07px;background:#0a0a0a"></i>
<i style="left:357.6px;top:377.2px;width:4.07px;height:4.07px;background:#8e8e8e"></i>
<i style="left:361.5px;top:377.2px;width:4.07px;height:4.07px;background:#4a4a4a"></i>
<i style="left:369.3px;top:377.2px;width:4.07px;height:4.07px;background:#8e8e8e"></i>
<i style="left:377.2px;top:377.2px;width:4.07px;height:4.07px;background:#0a0a0a"></i>
<i style="left:381.1px;top:377.2px;width:4.07px;height:4.07px;background:#0a0a0a"></i>
<i style="left:385.0px;top:377.2px;width:4.07px;height:4.07px;background:#0a0a0a"></i>
<i style="left:326.2px;top:381.1px;width:4.07px;height:4.07px;background:#0a0a0a"></i>
<i style="left:330.1px;top:381.1px;width:4.07px;height:4.07px;background:#8e8e8e"></i>
<i style="left:341.9px;top:381.1px;width:4.07px;height:4.07px;background:#8e8e8e"></i>
<i style="left:353.6px;top:381.1px;width:4.07px;height:4.07px;background:#0a0a0a"></i>
<i style="left:365.4px;top:381.1px;width:4.07px;height:4.07px;background:#0a0a0a"></i>
<i style="left:369.3px;top:381.1px;width:4.07px;height:4.07px;background:#8e8e8e"></i>
<i style="left:330.1px;top:385.0px;width:4.07px;height:4.07px;background:#0a0a0a"></i>
<i style="left:341.9px;top:385.0px;width:4.07px;height:4.07px;background:#0a0a0a"></i>
<i style="left:353.6px;top:385.0px;width:4.07px;height:4.07px;background:#0a0a0a"></i>
<i style="left:369.3px;top:385.0px;width:4.07px;height:4.07px;background:#8e8e8e"></i>
<i style="left:373.2px;top:385.0px;width:4.07px;height:4.07px;background:#0a0a0a"></i>
<i style="left:377.2px;top:385.0px;width:4.07px;height:4.07px;background:#0a0a0a"></i>
<i style="left:381.1px;top:385.0px;width:4.07px;height:4.07px;background:#0a0a0a"></i>
<i style="left:326.2px;top:397.0px;width:4.07px;height:4.07px;background:#dadada"></i>
<i style="left:330.1px;top:397.0px;width:4.07px;height:4.07px;background:#0a0a0a"></i>
<i style="left:341.9px;top:397.0px;width:4.07px;height:4.07px;background:#0a0a0a"></i>
<i style="left:353.6px;top:397.0px;width:4.07px;height:4.07px;background:#0a0a0a"></i>
<i style="left:361.5px;top:397.0px;width:4.07px;height:4.07px;background:#0a0a0a"></i>
<i style="left:365.4px;top:397.0px;width:4.07px;height:4.07px;background:#dadada"></i>
<i style="left:369.3px;top:397.0px;width:4.07px;height:4.07px;background:#8e8e8e"></i>
<i style="left:377.2px;top:397.0px;width:4.07px;height:4.07px;background:#0a0a0a"></i>
<i style="left:385.0px;top:397.0px;width:4.07px;height:4.07px;background:#0a0a0a"></i>
<i style="left:326.2px;top:400.9px;width:4.07px;height:4.07px;background:#4a4a4a"></i>
<i style="left:330.1px;top:400.9px;width:4.07px;height:4.07px;background:#8e8e8e"></i>
<i style="left:341.9px;top:400.9px;width:4.07px;height:4.07px;background:#4a4a4a"></i>
<i style="left:349.7px;top:400.9px;width:4.07px;height:4.07px;background:#dadada"></i>
<i style="left:353.6px;top:400.9px;width:4.07px;height:4.07px;background:#4a4a4a"></i>
<i style="left:361.5px;top:400.9px;width:4.07px;height:4.07px;background:#0a0a0a"></i>
<i style="left:365.4px;top:400.9px;width:4.07px;height:4.07px;background:#dadada"></i>
<i style="left:369.3px;top:400.9px;width:4.07px;height:4.07px;background:#8e8e8e"></i>
<i style="left:377.2px;top:400.9px;width:4.07px;height:4.07px;background:#0a0a0a"></i>
<i style="left:385.0px;top:400.9px;width:4.07px;height:4.07px;background:#0a0a0a"></i>
<i style="left:326.2px;top:404.8px;width:4.07px;height:4.07px;background:#0a0a0a"></i>
<i style="left:330.1px;top:404.8px;width:4.07px;height:4.07px;background:#4a4a4a"></i>
<i style="left:341.9px;top:404.8px;width:4.07px;height:4.07px;background:#dadada"></i>
<i style="left:353.6px;top:404.8px;width:4.07px;height:4.07px;background:#8e8e8e"></i>
<i style="left:357.6px;top:404.8px;width:4.07px;height:4.07px;background:#8e8e8e"></i>
<i style="left:361.5px;top:404.8px;width:4.07px;height:4.07px;background:#0a0a0a"></i>
<i style="left:365.4px;top:404.8px;width:4.07px;height:4.07px;background:#0a0a0a"></i>
<i style="left:369.3px;top:404.8px;width:4.07px;height:4.07px;background:#0a0a0a"></i>
<i style="left:373.2px;top:404.8px;width:4.07px;height:4.07px;background:#0a0a0a"></i>
<i style="left:377.2px;top:404.8px;width:4.07px;height:4.07px;background:#0a0a0a"></i>
<i style="left:381.1px;top:404.8px;width:4.07px;height:4.07px;background:#4a4a4a"></i>
<i style="left:385.0px;top:404.8px;width:4.07px;height:4.07px;background:#8e8e8e"></i>
<i style="left:326.2px;top:421.0px;width:4.07px;height:4.07px;background:#4a4a4a"></i>
<i style="left:330.1px;top:421.0px;width:4.07px;height:4.07px;background:#8e8e8e"></i>
<i style="left:353.6px;top:421.0px;width:4.07px;height:4.07px;background:#0a0a0a"></i>
<i style="left:357.6px;top:421.0px;width:4.07px;height:4.07px;background:#4a4a4a"></i>
<i style="left:361.5px;top:421.0px;width:4.07px;height:4.07px;background:#8e8e8e"></i>
<i style="left:369.3px;top:421.0px;width:4.07px;height:4.07px;background:#0a0a0a"></i>
<i style="left:381.1px;top:421.0px;width:4.07px;height:4.07px;background:#0a0a0a"></i>
<i style="left:326.2px;top:424.9px;width:4.07px;height:4.07px;background:#0a0a0a"></i>
<i style="left:349.7px;top:424.9px;width:4.07px;height:4.07px;background:#8e8e8e"></i>
<i style="left:357.6px;top:424.9px;width:4.07px;height:4.07px;background:#4a4a4a"></i>
<i style="left:365.4px;top:424.9px;width:4.07px;height:4.07px;background:#0a0a0a"></i>
<i style="left:369.3px;top:424.9px;width:4.07px;height:4.07px;background:#4a4a4a"></i>
<i style="left:377.2px;top:424.9px;width:4.07px;height:4.07px;background:#0a0a0a"></i>
<i style="left:326.2px;top:440.3px;width:4.07px;height:4.07px;background:#0a0a0a"></i>
<i style="left:338.0px;top:440.3px;width:4.07px;height:4.07px;background:#8e8e8e"></i>
<i style="left:341.9px;top:440.3px;width:4.07px;height:4.07px;background:#0a0a0a"></i>
<i style="left:349.7px;top:440.3px;width:4.07px;height:4.07px;background:#8e8e8e"></i>
<i style="left:357.6px;top:440.3px;width:4.07px;height:4.07px;background:#dadada"></i>
<i style="left:365.4px;top:440.3px;width:4.07px;height:4.07px;background:#0a0a0a"></i>
<i style="left:377.2px;top:440.3px;width:4.07px;height:4.07px;background:#4a4a4a"></i>
<i style="left:388.9px;top:440.3px;width:4.07px;height:4.07px;background:#dadada"></i>
<i style="left:326.2px;top:444.2px;width:4.07px;height:4.07px;background:#8e8e8e"></i>
<i style="left:334.0px;top:444.2px;width:4.07px;height:4.07px;background:#0a0a0a"></i>
<i style="left:341.9px;top:444.2px;width:4.07px;height:4.07px;background:#dadada"></i>
<i style="left:353.6px;top:444.2px;width:4.07px;height:4.07px;background:#dadada"></i>
<i style="left:369.3px;top:444.2px;width:4.07px;height:4.07px;background:#8e8e8e"></i>
<i style="left:381.1px;top:444.2px;width:4.07px;height:4.07px;background:#0a0a0a"></i>
<i style="left:388.9px;top:444.2px;width:4.07px;height:4.07px;background:#8e8e8e"></i>
<i style="left:326.2px;top:460.0px;width:4.07px;height:4.07px;background:#0a0a0a"></i>
<i style="left:330.1px;top:460.0px;width:4.07px;height:4.07px;background:#dadada"></i>
<i style="left:334.0px;top:460.0px;width:4.07px;height:4.07px;background:#dadada"></i>
<i style="left:338.0px;top:460.0px;width:4.07px;height:4.07px;background:#dadada"></i>
<i style="left:341.9px;top:460.0px;width:4.07px;height:4.07px;background:#dadada"></i>
<i style="left:353.6px;top:460.0px;width:4.07px;height:4.07px;background:#8e8e8e"></i>
<i style="left:361.5px;top:460.0px;width:4.07px;height:4.07px;background:#4a4a4a"></i>
<i style="left:365.4px;top:460.0px;width:4.07px;height:4.07px;background:#0a0a0a"></i>
<i style="left:369.3px;top:460.0px;width:4.07px;height:4.07px;background:#0a0a0a"></i>
<i style="left:385.0px;top:460.0px;width:4.07px;height:4.07px;background:#0a0a0a"></i>
<i style="left:326.2px;top:463.9px;width:4.07px;height:4.07px;background:#0a0a0a"></i>
<i style="left:330.1px;top:463.9px;width:4.07px;height:4.07px;background:#8e8e8e"></i>
<i style="left:353.6px;top:463.9px;width:4.07px;height:4.07px;background:#0a0a0a"></i>
<i style="left:357.6px;top:463.9px;width:4.07px;height:4.07px;background:#0a0a0a"></i>
<i style="left:361.5px;top:463.9px;width:4.07px;height:4.07px;background:#dadada"></i>
<i style="left:365.4px;top:463.9px;width:4.07px;height:4.07px;background:#0a0a0a"></i>
<i style="left:369.3px;top:463.9px;width:4.07px;height:4.07px;background:#0a0a0a"></i>
<i style="left:377.2px;top:463.9px;width:4.07px;height:4.07px;background:#dadada"></i>
<i style="left:330.1px;top:467.8px;width:4.07px;height:4.07px;background:#0a0a0a"></i>
<i style="left:334.0px;top:467.8px;width:4.07px;height:4.07px;background:#0a0a0a"></i>
<i style="left:338.0px;top:467.8px;width:4.07px;height:4.07px;background:#4a4a4a"></i>
<i style="left:341.9px;top:467.8px;width:4.07px;height:4.07px;background:#0a0a0a"></i>
<i style="left:353.6px;top:467.8px;width:4.07px;height:4.07px;background:#0a0a0a"></i>
<i style="left:361.5px;top:467.8px;width:4.07px;height:4.07px;background:#0a0a0a"></i>
<i style="left:369.3px;top:467.8px;width:4.07px;height:4.07px;background:#8e8e8e"></i>
<i style="left:373.2px;top:467.8px;width:4.07px;height:4.07px;background:#0a0a0a"></i>
<i style="left:330.1px;top:479.0px;width:4.07px;height:4.07px;background:#0a0a0a"></i>
<i style="left:334.0px;top:479.0px;width:4.07px;height:4.07px;background:#0a0a0a"></i>
<i style="left:341.9px;top:479.0px;width:4.07px;height:4.07px;background:#0a0a0a"></i>
<i style="left:353.6px;top:479.0px;width:4.07px;height:4.07px;background:#4a4a4a"></i>
<i style="left:361.5px;top:479.0px;width:4.07px;height:4.07px;background:#0a0a0a"></i>
<i style="left:365.4px;top:479.0px;width:4.07px;height:4.07px;background:#4a4a4a"></i>
<i style="left:369.3px;top:479.0px;width:4.07px;height:4.07px;background:#0a0a0a"></i>
<i style="left:377.2px;top:479.0px;width:4.07px;height:4.07px;background:#0a0a0a"></i>
<i style="left:385.0px;top:479.0px;width:4.07px;height:4.07px;background:#0a0a0a"></i>
<i style="left:326.2px;top:482.9px;width:4.07px;height:4.07px;background:#4a4a4a"></i>
<i style="left:330.1px;top:482.9px;width:4.07px;height:4.07px;background:#8e8e8e"></i>
<i style="left:334.0px;top:482.9px;width:4.07px;height:4.07px;background:#8e8e8e"></i>
<i style="left:341.9px;top:482.9px;width:4.07px;height:4.07px;background:#0a0a0a"></i>
<i style="left:353.6px;top:482.9px;width:4.07px;height:4.07px;background:#4a4a4a"></i>
<i style="left:357.6px;top:482.9px;width:4.07px;height:4.07px;background:#0a0a0a"></i>
<i style="left:361.5px;top:482.9px;width:4.07px;height:4.07px;background:#0a0a0a"></i>
<i style="left:365.4px;top:482.9px;width:4.07px;height:4.07px;background:#0a0a0a"></i>
<i style="left:369.3px;top:482.9px;width:4.07px;height:4.07px;background:#0a0a0a"></i>
<i style="left:381.1px;top:482.9px;width:4.07px;height:4.07px;background:#0a0a0a"></i>
<i style="left:388.9px;top:482.9px;width:4.07px;height:4.07px;background:#8e8e8e"></i>
<i style="left:326.2px;top:486.8px;width:4.07px;height:4.07px;background:#0a0a0a"></i>
<i style="left:330.1px;top:486.8px;width:4.07px;height:4.07px;background:#4a4a4a"></i>
<i style="left:334.0px;top:486.8px;width:4.07px;height:4.07px;background:#8e8e8e"></i>
<i style="left:341.9px;top:486.8px;width:4.07px;height:4.07px;background:#dadada"></i>
<i style="left:353.6px;top:486.8px;width:4.07px;height:4.07px;background:#4a4a4a"></i>
<i style="left:357.6px;top:486.8px;width:4.07px;height:4.07px;background:#dadada"></i>
<i style="left:361.5px;top:486.8px;width:4.07px;height:4.07px;background:#4a4a4a"></i>
<i style="left:365.4px;top:486.8px;width:4.07px;height:4.07px;background:#0a0a0a"></i>
<i style="left:369.3px;top:486.8px;width:4.07px;height:4.07px;background:#0a0a0a"></i>
<i style="left:373.2px;top:486.8px;width:4.07px;height:4.07px;background:#0a0a0a"></i>
<i style="left:377.2px;top:486.8px;width:4.07px;height:4.07px;background:#0a0a0a"></i>
<i style="left:381.1px;top:486.8px;width:4.07px;height:4.07px;background:#8e8e8e"></i>
<i style="left:385.0px;top:486.8px;width:4.07px;height:4.07px;background:#8e8e8e"></i>
<i style="left:326.2px;top:503.5px;width:4.07px;height:4.07px;background:#4a4a4a"></i>
<i style="left:330.1px;top:503.5px;width:4.07px;height:4.07px;background:#8e8e8e"></i>
<i style="left:334.0px;top:503.5px;width:4.07px;height:4.07px;background:#0a0a0a"></i>
<i style="left:353.6px;top:503.5px;width:4.07px;height:4.07px;background:#4a4a4a"></i>
<i style="left:361.5px;top:503.5px;width:4.07px;height:4.07px;background:#0a0a0a"></i>
<i style="left:365.4px;top:503.5px;width:4.07px;height:4.07px;background:#8e8e8e"></i>
<i style="left:388.9px;top:503.5px;width:4.07px;height:4.07px;background:#dadada"></i>
<i style="left:326.2px;top:507.4px;width:4.07px;height:4.07px;background:#0a0a0a"></i>
<i style="left:334.0px;top:507.4px;width:4.07px;height:4.07px;background:#8e8e8e"></i>
<i style="left:338.0px;top:507.4px;width:4.07px;height:4.07px;background:#8e8e8e"></i>
<i style="left:341.9px;top:507.4px;width:4.07px;height:4.07px;background:#8e8e8e"></i>
<i style="left:349.7px;top:507.4px;width:4.07px;height:4.07px;background:#8e8e8e"></i>
<i style="left:353.6px;top:507.4px;width:4.07px;height:4.07px;background:#4a4a4a"></i>
<i style="left:357.6px;top:507.4px;width:4.07px;height:4.07px;background:#8e8e8e"></i>
<i style="left:361.5px;top:507.4px;width:4.07px;height:4.07px;background:#0a0a0a"></i>
<i style="left:377.2px;top:507.4px;width:4.07px;height:4.07px;background:#4a4a4a"></i>
<i style="left:385.0px;top:507.4px;width:4.07px;height:4.07px;background:#4a4a4a"></i>
<i style="left:326.2px;top:522.9px;width:4.07px;height:4.07px;background:#0a0a0a"></i>
<i style="left:334.0px;top:522.9px;width:4.07px;height:4.07px;background:#dadada"></i>
<i style="left:349.7px;top:522.9px;width:4.07px;height:4.07px;background:#dadada"></i>
<i style="left:357.6px;top:522.9px;width:4.07px;height:4.07px;background:#8e8e8e"></i>
<i style="left:361.5px;top:522.9px;width:4.07px;height:4.07px;background:#dadada"></i>
<i style="left:365.4px;top:522.9px;width:4.07px;height:4.07px;background:#0a0a0a"></i>
<i style="left:369.3px;top:522.9px;width:4.07px;height:4.07px;background:#4a4a4a"></i>
<i style="left:377.2px;top:522.9px;width:4.07px;height:4.07px;background:#8e8e8e"></i>
<i style="left:381.1px;top:522.9px;width:4.07px;height:4.07px;background:#4a4a4a"></i>
<i style="left:388.9px;top:522.9px;width:4.07px;height:4.07px;background:#dadada"></i>
<i style="left:326.2px;top:526.8px;width:4.07px;height:4.07px;background:#8e8e8e"></i>
<i style="left:338.0px;top:526.8px;width:4.07px;height:4.07px;background:#8e8e8e"></i>
<i style="left:357.6px;top:526.8px;width:4.07px;height:4.07px;background:#0a0a0a"></i>
<i style="left:381.1px;top:526.8px;width:4.07px;height:4.07px;background:#0a0a0a"></i>
<i style="left:385.0px;top:526.8px;width:4.07px;height:4.07px;background:#8e8e8e"></i>
<i style="left:388.9px;top:526.8px;width:4.07px;height:4.07px;background:#8e8e8e"></i>
<i style="left:326.2px;top:542.0px;width:4.07px;height:4.07px;background:#0a0a0a"></i>
<i style="left:330.1px;top:542.0px;width:4.07px;height:4.07px;background:#8e8e8e"></i>
<i style="left:334.0px;top:542.0px;width:4.07px;height:4.07px;background:#4a4a4a"></i>
<i style="left:341.9px;top:542.0px;width:4.07px;height:4.07px;background:#8e8e8e"></i>
<i style="left:353.6px;top:542.0px;width:4.07px;height:4.07px;background:#8e8e8e"></i>
<i style="left:357.6px;top:542.0px;width:4.07px;height:4.07px;background:#8e8e8e"></i>
<i style="left:361.5px;top:542.0px;width:4.07px;height:4.07px;background:#0a0a0a"></i>
<i style="left:365.4px;top:542.0px;width:4.07px;height:4.07px;background:#4a4a4a"></i>
<i style="left:369.3px;top:542.0px;width:4.07px;height:4.07px;background:#8e8e8e"></i>
<i style="left:377.2px;top:542.0px;width:4.07px;height:4.07px;background:#0a0a0a"></i>
<i style="left:381.1px;top:542.0px;width:4.07px;height:4.07px;background:#4a4a4a"></i>
<i style="left:385.0px;top:542.0px;width:4.07px;height:4.07px;background:#dadada"></i>
<i style="left:326.2px;top:545.9px;width:4.07px;height:4.07px;background:#0a0a0a"></i>
<i style="left:330.1px;top:545.9px;width:4.07px;height:4.07px;background:#8e8e8e"></i>
<i style="left:338.0px;top:545.9px;width:4.07px;height:4.07px;background:#8e8e8e"></i>
<i style="left:353.6px;top:545.9px;width:4.07px;height:4.07px;background:#dadada"></i>
<i style="left:361.5px;top:545.9px;width:4.07px;height:4.07px;background:#4a4a4a"></i>
<i style="left:365.4px;top:545.9px;width:4.07px;height:4.07px;background:#dadada"></i>
<i style="left:369.3px;top:545.9px;width:4.07px;height:4.07px;background:#4a4a4a"></i>
<i style="left:377.2px;top:545.9px;width:4.07px;height:4.07px;background:#8e8e8e"></i>
<i style="left:381.1px;top:545.9px;width:4.07px;height:4.07px;background:#0a0a0a"></i>
<i style="left:330.1px;top:549.8px;width:4.07px;height:4.07px;background:#0a0a0a"></i>
<i style="left:334.0px;top:549.8px;width:4.07px;height:4.07px;background:#0a0a0a"></i>
<i style="left:341.9px;top:549.8px;width:4.07px;height:4.07px;background:#0a0a0a"></i>
<i style="left:353.6px;top:549.8px;width:4.07px;height:4.07px;background:#0a0a0a"></i>
<i style="left:361.5px;top:549.8px;width:4.07px;height:4.07px;background:#0a0a0a"></i>
<i style="left:365.4px;top:549.8px;width:4.07px;height:4.07px;background:#dadada"></i>
<i style="left:369.3px;top:549.8px;width:4.07px;height:4.07px;background:#dadada"></i>
<i style="left:373.2px;top:549.8px;width:4.07px;height:4.07px;background:#0a0a0a"></i>
<i style="left:377.2px;top:549.8px;width:4.07px;height:4.07px;background:#4a4a4a"></i>
<i style="left:326.2px;top:561.4px;width:4.07px;height:4.07px;background:#dadada"></i>
<i style="left:330.1px;top:561.4px;width:4.07px;height:4.07px;background:#0a0a0a"></i>
<i style="left:334.0px;top:561.4px;width:4.07px;height:4.07px;background:#0a0a0a"></i>
<i style="left:341.9px;top:561.4px;width:4.07px;height:4.07px;background:#0a0a0a"></i>
<i style="left:349.7px;top:561.4px;width:4.07px;height:4.07px;background:#8e8e8e"></i>
<i style="left:353.6px;top:561.4px;width:4.07px;height:4.07px;background:#0a0a0a"></i>
<i style="left:361.5px;top:561.4px;width:4.07px;height:4.07px;background:#0a0a0a"></i>
<i style="left:369.3px;top:561.4px;width:4.07px;height:4.07px;background:#8e8e8e"></i>
<i style="left:385.0px;top:561.4px;width:4.07px;height:4.07px;background:#0a0a0a"></i>
<i style="left:326.2px;top:565.3px;width:4.07px;height:4.07px;background:#4a4a4a"></i>
<i style="left:330.1px;top:565.3px;width:4.07px;height:4.07px;background:#8e8e8e"></i>
<i style="left:334.0px;top:565.3px;width:4.07px;height:4.07px;background:#0a0a0a"></i>
<i style="left:353.6px;top:565.3px;width:4.07px;height:4.07px;background:#0a0a0a"></i>
<i style="left:357.6px;top:565.3px;width:4.07px;height:4.07px;background:#0a0a0a"></i>
<i style="left:361.5px;top:565.3px;width:4.07px;height:4.07px;background:#0a0a0a"></i>
<i style="left:365.4px;top:565.3px;width:4.07px;height:4.07px;background:#4a4a4a"></i>
<i style="left:369.3px;top:565.3px;width:4.07px;height:4.07px;background:#8e8e8e"></i>
<i style="left:377.2px;top:565.3px;width:4.07px;height:4.07px;background:#0a0a0a"></i>
<i style="left:385.0px;top:565.3px;width:4.07px;height:4.07px;background:#0a0a0a"></i>
<i style="left:326.2px;top:569.2px;width:4.07px;height:4.07px;background:#0a0a0a"></i>
<i style="left:330.1px;top:569.2px;width:4.07px;height:4.07px;background:#4a4a4a"></i>
<i style="left:334.0px;top:569.2px;width:4.07px;height:4.07px;background:#4a4a4a"></i>
<i style="left:341.9px;top:569.2px;width:4.07px;height:4.07px;background:#8e8e8e"></i>
<i style="left:357.6px;top:569.2px;width:4.07px;height:4.07px;background:#dadada"></i>
<i style="left:361.5px;top:569.2px;width:4.07px;height:4.07px;background:#4a4a4a"></i>
<i style="left:369.3px;top:569.2px;width:4.07px;height:4.07px;background:#8e8e8e"></i>
<i style="left:373.2px;top:569.2px;width:4.07px;height:4.07px;background:#0a0a0a"></i>
<i style="left:385.0px;top:569.2px;width:4.07px;height:4.07px;background:#8e8e8e"></i>
<i style="left:326.2px;top:585.0px;width:4.07px;height:4.07px;background:#4a4a4a"></i>
<i style="left:330.1px;top:585.0px;width:4.07px;height:4.07px;background:#8e8e8e"></i>
<i style="left:353.6px;top:585.0px;width:4.07px;height:4.07px;background:#dadada"></i>
<i style="left:357.6px;top:585.0px;width:4.07px;height:4.07px;background:#0a0a0a"></i>
<i style="left:365.4px;top:585.0px;width:4.07px;height:4.07px;background:#8e8e8e"></i>
<i style="left:377.2px;top:585.0px;width:4.07px;height:4.07px;background:#0a0a0a"></i>
<i style="left:326.2px;top:588.9px;width:4.07px;height:4.07px;background:#0a0a0a"></i>
<i style="left:334.0px;top:588.9px;width:4.07px;height:4.07px;background:#0a0a0a"></i>
<i style="left:349.7px;top:588.9px;width:4.07px;height:4.07px;background:#8e8e8e"></i>
<i style="left:357.6px;top:588.9px;width:4.07px;height:4.07px;background:#4a4a4a"></i>
<i style="left:361.5px;top:588.9px;width:4.07px;height:4.07px;background:#dadada"></i>
<i style="left:377.2px;top:588.9px;width:4.07px;height:4.07px;background:#8e8e8e"></i>
<i style="left:381.1px;top:588.9px;width:4.07px;height:4.07px;background:#8e8e8e"></i>
<i style="left:469.7px;top:320.6px;width:4.07px;height:3.65px;background:#0a0a0a"></i>
<i style="left:477.5px;top:320.6px;width:4.07px;height:3.65px;background:#0a0a0a"></i>
<i style="left:465.7px;top:324.1px;width:4.07px;height:3.65px;background:#4a4a4a"></i>
<i style="left:473.6px;top:324.1px;width:4.07px;height:3.65px;background:#4a4a4a"></i>
<i style="left:457.9px;top:337.5px;width:4.07px;height:3.65px;background:#8e8e8e"></i>
<i style="left:469.7px;top:337.5px;width:4.07px;height:3.65px;background:#4a4a4a"></i>
<i style="left:477.5px;top:337.5px;width:4.07px;height:3.65px;background:#0a0a0a"></i>
<i style="left:457.9px;top:341.0px;width:4.07px;height:3.65px;background:#dadada"></i>
<i style="left:469.7px;top:341.0px;width:4.07px;height:3.65px;background:#0a0a0a"></i>
<i style="left:477.5px;top:341.0px;width:4.07px;height:3.65px;background:#0a0a0a"></i>
<i style="left:465.7px;top:344.5px;width:4.07px;height:3.65px;background:#4a4a4a"></i>
<i style="left:473.6px;top:344.5px;width:4.07px;height:3.65px;background:#4a4a4a"></i>
<i style="left:457.9px;top:358.2px;width:4.07px;height:3.65px;background:#8e8e8e"></i>
<i style="left:465.7px;top:361.7px;width:4.07px;height:3.65px;background:#0a0a0a"></i>
<i style="left:473.6px;top:361.7px;width:4.07px;height:3.65px;background:#0a0a0a"></i>
<i style="left:465.7px;top:365.2px;width:4.07px;height:3.65px;background:#4a4a4a"></i>
<i style="left:473.6px;top:365.2px;width:4.07px;height:3.65px;background:#4a4a4a"></i>
<i style="left:465.7px;top:379.0px;width:4.07px;height:3.65px;background:#8e8e8e"></i>
<i style="left:477.5px;top:379.0px;width:4.07px;height:3.65px;background:#0a0a0a"></i>
<i style="left:457.9px;top:382.5px;width:4.07px;height:3.65px;background:#0a0a0a"></i>
<i style="left:473.6px;top:382.5px;width:4.07px;height:3.65px;background:#4a4a4a"></i>
<i style="left:477.5px;top:382.5px;width:4.07px;height:3.65px;background:#0a0a0a"></i>
<i style="left:457.9px;top:386.0px;width:4.07px;height:3.65px;background:#4a4a4a"></i>
<i style="left:473.6px;top:386.0px;width:4.07px;height:3.65px;background:#4a4a4a"></i>
<i style="left:477.5px;top:399.2px;width:4.07px;height:3.65px;background:#0a0a0a"></i>
<i style="left:457.9px;top:402.7px;width:4.07px;height:3.65px;background:#0a0a0a"></i>
<i style="left:469.7px;top:402.7px;width:4.07px;height:3.65px;background:#0a0a0a"></i>
<i style="left:473.6px;top:402.7px;width:4.07px;height:3.65px;background:#4a4a4a"></i>
<i style="left:457.9px;top:406.2px;width:4.07px;height:3.65px;background:#8e8e8e"></i>
<i style="left:465.7px;top:406.2px;width:4.07px;height:3.65px;background:#4a4a4a"></i>
<i style="left:473.6px;top:406.2px;width:4.07px;height:3.65px;background:#8e8e8e"></i>
<i style="left:477.5px;top:406.2px;width:4.07px;height:3.65px;background:#8e8e8e"></i>
<i style="left:473.6px;top:420.0px;width:4.07px;height:3.65px;background:#0a0a0a"></i>
<i style="left:465.7px;top:423.5px;width:4.07px;height:3.65px;background:#0a0a0a"></i>
<i style="left:457.9px;top:427.0px;width:4.07px;height:3.65px;background:#4a4a4a"></i>
<i style="left:465.7px;top:427.0px;width:4.07px;height:3.65px;background:#8e8e8e"></i>
<i style="left:457.9px;top:440.6px;width:4.07px;height:3.65px;background:#8e8e8e"></i>
<i style="left:465.7px;top:440.6px;width:4.07px;height:3.65px;background:#0a0a0a"></i>
<i style="left:473.6px;top:440.6px;width:4.07px;height:3.65px;background:#0a0a0a"></i>
<i style="left:457.9px;top:444.1px;width:4.07px;height:3.65px;background:#dadada"></i>
<i style="left:465.7px;top:444.1px;width:4.07px;height:3.65px;background:#8e8e8e"></i>
<i style="left:469.7px;top:444.1px;width:4.07px;height:3.65px;background:#8e8e8e"></i>
<i style="left:473.6px;top:461.3px;width:4.07px;height:3.65px;background:#4a4a4a"></i>
<i style="left:457.9px;top:464.8px;width:4.07px;height:3.65px;background:#0a0a0a"></i>
<i style="left:469.7px;top:464.8px;width:4.07px;height:3.65px;background:#0a0a0a"></i>
<i style="left:473.6px;top:464.8px;width:4.07px;height:3.65px;background:#8e8e8e"></i>
<i style="left:477.5px;top:464.8px;width:4.07px;height:3.65px;background:#8e8e8e"></i>
<i style="left:457.9px;top:468.3px;width:4.07px;height:3.65px;background:#8e8e8e"></i>
<i style="left:465.7px;top:468.3px;width:4.07px;height:3.65px;background:#4a4a4a"></i>
<i style="left:469.7px;top:481.6px;width:4.07px;height:3.65px;background:#4a4a4a"></i>
<i style="left:465.7px;top:485.1px;width:4.07px;height:3.65px;background:#0a0a0a"></i>
<i style="left:477.5px;top:485.1px;width:4.07px;height:3.65px;background:#0a0a0a"></i>
<i style="left:457.9px;top:488.6px;width:4.07px;height:3.65px;background:#4a4a4a"></i>
<i style="left:465.7px;top:488.6px;width:4.07px;height:3.65px;background:#8e8e8e"></i>
<i style="left:469.7px;top:488.6px;width:4.07px;height:3.65px;background:#8e8e8e"></i>
<i style="left:473.6px;top:488.6px;width:4.07px;height:3.65px;background:#8e8e8e"></i>
<i style="left:477.5px;top:502.0px;width:4.07px;height:3.65px;background:#0a0a0a"></i>
<i style="left:465.7px;top:505.5px;width:4.07px;height:3.65px;background:#0a0a0a"></i>
<i style="left:477.5px;top:505.5px;width:4.07px;height:3.65px;background:#0a0a0a"></i>
<i style="left:457.9px;top:509.0px;width:4.07px;height:3.65px;background:#4a4a4a"></i>
<i style="left:465.7px;top:509.0px;width:4.07px;height:3.65px;background:#8e8e8e"></i>
<i style="left:473.6px;top:509.0px;width:4.07px;height:3.65px;background:#4a4a4a"></i>
<i style="left:469.7px;top:523.0px;width:4.07px;height:3.65px;background:#4a4a4a"></i>
<i style="left:477.5px;top:523.0px;width:4.07px;height:3.65px;background:#0a0a0a"></i>
<i style="left:465.7px;top:526.5px;width:4.07px;height:3.65px;background:#4a4a4a"></i>
<i style="left:469.7px;top:526.5px;width:4.07px;height:3.65px;background:#0a0a0a"></i>
<i style="left:473.6px;top:526.5px;width:4.07px;height:3.65px;background:#4a4a4a"></i>
<i style="left:477.5px;top:526.5px;width:4.07px;height:3.65px;background:#0a0a0a"></i>
<i style="left:457.9px;top:530.0px;width:4.07px;height:3.65px;background:#4a4a4a"></i>
<i style="left:465.7px;top:530.0px;width:4.07px;height:3.65px;background:#4a4a4a"></i>
<i style="left:473.6px;top:530.0px;width:4.07px;height:3.65px;background:#4a4a4a"></i>
<i style="left:469.7px;top:543.2px;width:4.07px;height:3.65px;background:#dadada"></i>
<i style="left:477.5px;top:543.2px;width:4.07px;height:3.65px;background:#0a0a0a"></i>
<i style="left:457.9px;top:546.7px;width:4.07px;height:3.65px;background:#0a0a0a"></i>
<i style="left:469.7px;top:546.7px;width:4.07px;height:3.65px;background:#0a0a0a"></i>
<i style="left:477.5px;top:546.7px;width:4.07px;height:3.65px;background:#0a0a0a"></i>
<i style="left:457.9px;top:550.2px;width:4.07px;height:3.65px;background:#8e8e8e"></i>
<i style="left:465.7px;top:550.2px;width:4.07px;height:3.65px;background:#4a4a4a"></i>
<i style="left:473.6px;top:550.2px;width:4.07px;height:3.65px;background:#4a4a4a"></i>
<i style="left:469.7px;top:564.0px;width:4.07px;height:3.65px;background:#dadada"></i>
<i style="left:477.5px;top:564.0px;width:4.07px;height:3.65px;background:#0a0a0a"></i>
<i style="left:469.7px;top:567.5px;width:4.07px;height:3.65px;background:#0a0a0a"></i>
<i style="left:473.6px;top:567.5px;width:4.07px;height:3.65px;background:#4a4a4a"></i>
<i style="left:457.9px;top:571.0px;width:4.07px;height:3.65px;background:#4a4a4a"></i>
<i style="left:465.7px;top:571.0px;width:4.07px;height:3.65px;background:#4a4a4a"></i>
<i style="left:473.6px;top:571.0px;width:4.07px;height:3.65px;background:#8e8e8e"></i>
<i style="left:477.5px;top:571.0px;width:4.07px;height:3.65px;background:#8e8e8e"></i>
<i style="left:469.7px;top:585.0px;width:4.07px;height:3.65px;background:#4a4a4a"></i>
<i style="left:477.5px;top:585.0px;width:4.07px;height:3.65px;background:#4a4a4a"></i>
<i style="left:465.7px;top:588.5px;width:4.07px;height:3.65px;background:#4a4a4a"></i>
<i style="left:469.7px;top:588.5px;width:4.07px;height:3.65px;background:#0a0a0a"></i>
<i style="left:477.5px;top:588.5px;width:4.07px;height:3.65px;background:#0a0a0a"></i>
<i style="left:457.9px;top:592.0px;width:4.07px;height:3.65px;background:#4a4a4a"></i>
<i style="left:465.7px;top:592.0px;width:4.07px;height:3.65px;background:#4a4a4a"></i>
<i style="left:473.6px;top:592.0px;width:4.07px;height:3.65px;background:#4a4a4a"></i>
<i style="left:533.6px;top:313.4px;width:4.07px;height:4.07px;background:#dadada"></i>
<i style="left:541.4px;top:313.4px;width:4.07px;height:4.07px;background:#0a0a0a"></i>
<i style="left:549.3px;top:313.4px;width:4.07px;height:4.07px;background:#8e8e8e"></i>
<i style="left:541.4px;top:317.3px;width:4.07px;height:4.07px;background:#0a0a0a"></i>
<i style="left:545.4px;top:317.3px;width:4.07px;height:4.07px;background:#0a0a0a"></i>
<i style="left:541.4px;top:321.2px;width:4.07px;height:4.07px;background:#4a4a4a"></i>
<i style="left:545.4px;top:321.2px;width:4.07px;height:4.07px;background:#4a4a4a"></i>
<i style="left:549.3px;top:321.2px;width:4.07px;height:4.07px;background:#0a0a0a"></i>
<i style="left:533.6px;top:337.0px;width:4.07px;height:4.07px;background:#0a0a0a"></i>
<i style="left:541.4px;top:337.0px;width:4.07px;height:4.07px;background:#dadada"></i>
<i style="left:545.4px;top:337.0px;width:4.07px;height:4.07px;background:#0a0a0a"></i>
<i style="left:549.3px;top:337.0px;width:4.07px;height:4.07px;background:#dadada"></i>
<i style="left:537.5px;top:340.9px;width:4.07px;height:4.07px;background:#4a4a4a"></i>
<i style="left:545.4px;top:340.9px;width:4.07px;height:4.07px;background:#0a0a0a"></i>
<i style="left:549.3px;top:340.9px;width:4.07px;height:4.07px;background:#4a4a4a"></i>
<i style="left:545.4px;top:357.0px;width:4.07px;height:4.07px;background:#0a0a0a"></i>
<i style="left:549.3px;top:357.0px;width:4.07px;height:4.07px;background:#0a0a0a"></i>
<i style="left:533.6px;top:360.9px;width:4.07px;height:4.07px;background:#8e8e8e"></i>
<i style="left:549.3px;top:360.9px;width:4.07px;height:4.07px;background:#dadada"></i>
<i style="left:537.5px;top:376.7px;width:4.07px;height:4.07px;background:#8e8e8e"></i>
<i style="left:541.4px;top:376.7px;width:4.07px;height:4.07px;background:#8e8e8e"></i>
<i style="left:549.3px;top:376.7px;width:4.07px;height:4.07px;background:#dadada"></i>
<i style="left:533.6px;top:380.6px;width:4.07px;height:4.07px;background:#0a0a0a"></i>
<i style="left:549.3px;top:380.6px;width:4.07px;height:4.07px;background:#dadada"></i>
<i style="left:533.6px;top:384.5px;width:4.07px;height:4.07px;background:#0a0a0a"></i>
<i style="left:549.3px;top:384.5px;width:4.07px;height:4.07px;background:#dadada"></i>
<i style="left:533.6px;top:396.4px;width:4.07px;height:4.07px;background:#0a0a0a"></i>
<i style="left:541.4px;top:396.4px;width:4.07px;height:4.07px;background:#0a0a0a"></i>
<i style="left:549.3px;top:396.4px;width:4.07px;height:4.07px;background:#8e8e8e"></i>
<i style="left:541.4px;top:400.3px;width:4.07px;height:4.07px;background:#0a0a0a"></i>
<i style="left:549.3px;top:400.3px;width:4.07px;height:4.07px;background:#0a0a0a"></i>
<i style="left:533.6px;top:404.2px;width:4.07px;height:4.07px;background:#8e8e8e"></i>
<i style="left:537.5px;top:404.2px;width:4.07px;height:4.07px;background:#8e8e8e"></i>
<i style="left:541.4px;top:404.2px;width:4.07px;height:4.07px;background:#8e8e8e"></i>
<i style="left:545.4px;top:404.2px;width:4.07px;height:4.07px;background:#0a0a0a"></i>
<i style="left:549.3px;top:404.2px;width:4.07px;height:4.07px;background:#0a0a0a"></i>
<i style="left:533.6px;top:420.5px;width:4.07px;height:4.07px;background:#0a0a0a"></i>
<i style="left:537.5px;top:420.5px;width:4.07px;height:4.07px;background:#0a0a0a"></i>
<i style="left:549.3px;top:420.5px;width:4.07px;height:4.07px;background:#4a4a4a"></i>
<i style="left:537.5px;top:424.4px;width:4.07px;height:4.07px;background:#8e8e8e"></i>
<i style="left:545.4px;top:424.4px;width:4.07px;height:4.07px;background:#8e8e8e"></i>
<i style="left:525.8px;top:440.0px;width:4.07px;height:4.07px;background:#0a0a0a"></i>
<i style="left:537.5px;top:440.0px;width:4.07px;height:4.07px;background:#8e8e8e"></i>
<i style="left:545.4px;top:440.0px;width:4.07px;height:4.07px;background:#0a0a0a"></i>
<i style="left:549.3px;top:440.0px;width:4.07px;height:4.07px;background:#dadada"></i>
<i style="left:533.6px;top:443.9px;width:4.07px;height:4.07px;background:#8e8e8e"></i>
<i style="left:525.8px;top:460.0px;width:4.07px;height:4.07px;background:#0a0a0a"></i>
<i style="left:541.4px;top:460.0px;width:4.07px;height:4.07px;background:#8e8e8e"></i>
<i style="left:545.4px;top:460.0px;width:4.07px;height:4.07px;background:#8e8e8e"></i>
<i style="left:549.3px;top:460.0px;width:4.07px;height:4.07px;background:#0a0a0a"></i>
<i style="left:533.6px;top:463.9px;width:4.07px;height:4.07px;background:#0a0a0a"></i>
<i style="left:537.5px;top:463.9px;width:4.07px;height:4.07px;background:#0a0a0a"></i>
<i style="left:533.6px;top:467.8px;width:4.07px;height:4.07px;background:#0a0a0a"></i>
<i style="left:541.4px;top:467.8px;width:4.07px;height:4.07px;background:#0a0a0a"></i>
<i style="left:525.8px;top:479.4px;width:4.07px;height:4.07px;background:#0a0a0a"></i>
<i style="left:533.6px;top:479.4px;width:4.07px;height:4.07px;background:#0a0a0a"></i>
<i style="left:541.4px;top:479.4px;width:4.07px;height:4.07px;background:#0a0a0a"></i>
<i style="left:549.3px;top:479.4px;width:4.07px;height:4.07px;background:#0a0a0a"></i>
<i style="left:537.5px;top:483.3px;width:4.07px;height:4.07px;background:#8e8e8e"></i>
<i style="left:549.3px;top:483.3px;width:4.07px;height:4.07px;background:#0a0a0a"></i>
<i style="left:525.8px;top:487.2px;width:4.07px;height:4.07px;background:#4a4a4a"></i>
<i style="left:533.6px;top:487.2px;width:4.07px;height:4.07px;background:#4a4a4a"></i>
<i style="left:541.4px;top:487.2px;width:4.07px;height:4.07px;background:#0a0a0a"></i>
<i style="left:545.4px;top:487.2px;width:4.07px;height:4.07px;background:#0a0a0a"></i>
<i style="left:549.3px;top:487.2px;width:4.07px;height:4.07px;background:#4a4a4a"></i>
<i style="left:533.6px;top:503.5px;width:4.07px;height:4.07px;background:#4a4a4a"></i>
<i style="left:537.5px;top:503.5px;width:4.07px;height:4.07px;background:#4a4a4a"></i>
<i style="left:541.4px;top:503.5px;width:4.07px;height:4.07px;background:#4a4a4a"></i>
<i style="left:549.3px;top:503.5px;width:4.07px;height:4.07px;background:#4a4a4a"></i>
<i style="left:525.8px;top:507.4px;width:4.07px;height:4.07px;background:#dadada"></i>
<i style="left:537.5px;top:507.4px;width:4.07px;height:4.07px;background:#8e8e8e"></i>
<i style="left:545.4px;top:507.4px;width:4.07px;height:4.07px;background:#8e8e8e"></i>
<i style="left:537.5px;top:523.0px;width:4.07px;height:4.07px;background:#dadada"></i>
<i style="left:545.4px;top:523.0px;width:4.07px;height:4.07px;background:#dadada"></i>
<i style="left:549.3px;top:523.0px;width:4.07px;height:4.07px;background:#dadada"></i>
<i style="left:537.5px;top:526.9px;width:4.07px;height:4.07px;background:#4a4a4a"></i>
<i style="left:541.4px;top:543.0px;width:4.07px;height:4.07px;background:#8e8e8e"></i>
<i style="left:545.4px;top:543.0px;width:4.07px;height:4.07px;background:#0a0a0a"></i>
<i style="left:549.3px;top:543.0px;width:4.07px;height:4.07px;background:#0a0a0a"></i>
<i style="left:541.4px;top:546.9px;width:4.07px;height:4.07px;background:#0a0a0a"></i>
<i style="left:545.4px;top:546.9px;width:4.07px;height:4.07px;background:#4a4a4a"></i>
<i style="left:549.3px;top:546.9px;width:4.07px;height:4.07px;background:#4a4a4a"></i>
<i style="left:525.8px;top:550.8px;width:4.07px;height:4.07px;background:#0a0a0a"></i>
<i style="left:533.6px;top:550.8px;width:4.07px;height:4.07px;background:#0a0a0a"></i>
<i style="left:537.5px;top:550.8px;width:4.07px;height:4.07px;background:#0a0a0a"></i>
<i style="left:541.4px;top:550.8px;width:4.07px;height:4.07px;background:#0a0a0a"></i>
<i style="left:549.3px;top:550.8px;width:4.07px;height:4.07px;background:#8e8e8e"></i>
<i style="left:525.8px;top:563.2px;width:4.07px;height:4.07px;background:#0a0a0a"></i>
<i style="left:533.6px;top:563.2px;width:4.07px;height:4.07px;background:#0a0a0a"></i>
<i style="left:537.5px;top:563.2px;width:4.07px;height:4.07px;background:#4a4a4a"></i>
<i style="left:541.4px;top:563.2px;width:4.07px;height:4.07px;background:#0a0a0a"></i>
<i style="left:549.3px;top:563.2px;width:4.07px;height:4.07px;background:#4a4a4a"></i>
<i style="left:525.8px;top:567.1px;width:4.07px;height:4.07px;background:#0a0a0a"></i>
<i style="left:533.6px;top:567.1px;width:4.07px;height:4.07px;background:#0a0a0a"></i>
<i style="left:541.4px;top:567.1px;width:4.07px;height:4.07px;background:#4a4a4a"></i>
<i style="left:549.3px;top:567.1px;width:4.07px;height:4.07px;background:#0a0a0a"></i>
<i style="left:545.4px;top:571.0px;width:4.07px;height:4.07px;background:#0a0a0a"></i>
<i style="left:549.3px;top:571.0px;width:4.07px;height:4.07px;background:#0a0a0a"></i>
<i style="left:525.8px;top:586.8px;width:4.07px;height:4.07px;background:#8e8e8e"></i>
<i style="left:533.6px;top:586.8px;width:4.07px;height:4.07px;background:#0a0a0a"></i>
<i style="left:537.5px;top:586.8px;width:4.07px;height:4.07px;background:#4a4a4a"></i>
<i style="left:541.4px;top:586.8px;width:4.07px;height:4.07px;background:#8e8e8e"></i>
<i style="left:545.4px;top:586.8px;width:4.07px;height:4.07px;background:#0a0a0a"></i>
<i style="left:549.3px;top:586.8px;width:4.07px;height:4.07px;background:#dadada"></i>
<i style="left:525.8px;top:590.7px;width:4.07px;height:4.07px;background:#8e8e8e"></i>
<i style="left:533.6px;top:590.7px;width:4.07px;height:4.07px;background:#0a0a0a"></i>
<i style="left:537.5px;top:590.7px;width:4.07px;height:4.07px;background:#8e8e8e"></i>
<i style="left:545.4px;top:590.7px;width:4.07px;height:4.07px;background:#0a0a0a"></i>
<i style="left:549.3px;top:590.7px;width:4.07px;height:4.07px;background:#4a4a4a"></i>
<i style="left:687.1px;top:312.8px;width:4.25px;height:4.07px;background:#dadada"></i>
<i style="left:695.3px;top:312.8px;width:4.25px;height:4.07px;background:#dadada"></i>
<i style="left:695.3px;top:316.7px;width:4.25px;height:4.07px;background:#dadada"></i>
<i style="left:691.2px;top:320.6px;width:4.25px;height:4.07px;background:#0a0a0a"></i>
<i style="left:687.1px;top:336.3px;width:4.25px;height:4.07px;background:#4a4a4a"></i>
<i style="left:687.1px;top:340.2px;width:4.25px;height:4.07px;background:#0a0a0a"></i>
<i style="left:691.2px;top:340.2px;width:4.25px;height:4.07px;background:#0a0a0a"></i>
<i style="left:687.1px;top:356.1px;width:4.25px;height:4.07px;background:#4a4a4a"></i>
<i style="left:691.2px;top:356.1px;width:4.25px;height:4.07px;background:#8e8e8e"></i>
<i style="left:695.3px;top:356.1px;width:4.25px;height:4.07px;background:#dadada"></i>
<i style="left:691.2px;top:360.0px;width:4.25px;height:4.07px;background:#4a4a4a"></i>
<i style="left:687.1px;top:363.9px;width:4.25px;height:4.07px;background:#8e8e8e"></i>
<i style="left:695.3px;top:363.9px;width:4.25px;height:4.07px;background:#4a4a4a"></i>
<i style="left:687.1px;top:375.8px;width:4.25px;height:4.07px;background:#0a0a0a"></i>
<i style="left:691.2px;top:375.8px;width:4.25px;height:4.07px;background:#0a0a0a"></i>
<i style="left:695.3px;top:375.8px;width:4.25px;height:4.07px;background:#0a0a0a"></i>
<i style="left:687.1px;top:383.6px;width:4.25px;height:4.07px;background:#0a0a0a"></i>
<i style="left:695.3px;top:383.6px;width:4.25px;height:4.07px;background:#4a4a4a"></i>
<i style="left:687.1px;top:395.8px;width:4.25px;height:4.07px;background:#dadada"></i>
<i style="left:678.9px;top:399.7px;width:4.25px;height:4.07px;background:#8e8e8e"></i>
<i style="left:691.2px;top:399.7px;width:4.25px;height:4.07px;background:#0a0a0a"></i>
<i style="left:687.1px;top:403.6px;width:4.25px;height:4.07px;background:#dadada"></i>
<i style="left:691.2px;top:403.6px;width:4.25px;height:4.07px;background:#8e8e8e"></i>
<i style="left:678.9px;top:419.3px;width:4.25px;height:4.07px;background:#0a0a0a"></i>
<i style="left:691.2px;top:423.2px;width:4.25px;height:4.07px;background:#0a0a0a"></i>
<i style="left:695.3px;top:446.7px;width:4.25px;height:4.07px;background:#4a4a4a"></i>
<i style="left:687.1px;top:458.8px;width:4.25px;height:4.07px;background:#0a0a0a"></i>
<i style="left:687.1px;top:462.7px;width:4.25px;height:4.07px;background:#0a0a0a"></i>
<i style="left:687.1px;top:466.6px;width:4.25px;height:4.07px;background:#0a0a0a"></i>
<i style="left:691.2px;top:466.6px;width:4.25px;height:4.07px;background:#dadada"></i>
<i style="left:678.9px;top:482.5px;width:4.25px;height:4.07px;background:#dadada"></i>
<i style="left:687.1px;top:482.5px;width:4.25px;height:4.07px;background:#0a0a0a"></i>
<i style="left:687.1px;top:486.4px;width:4.25px;height:4.07px;background:#dadada"></i>
<i style="left:691.2px;top:486.4px;width:4.25px;height:4.07px;background:#dadada"></i>
<i style="left:678.9px;top:502.3px;width:4.25px;height:4.07px;background:#0a0a0a"></i>
<i style="left:691.2px;top:502.3px;width:4.25px;height:4.07px;background:#dadada"></i>
<i style="left:691.2px;top:506.2px;width:4.25px;height:4.07px;background:#0a0a0a"></i>
<i style="left:695.3px;top:506.2px;width:4.25px;height:4.07px;background:#0a0a0a"></i>
<i style="left:678.9px;top:522.0px;width:4.25px;height:4.07px;background:#dadada"></i>
<i style="left:687.1px;top:522.0px;width:4.25px;height:4.07px;background:#8e8e8e"></i>
<i style="left:691.2px;top:525.9px;width:4.25px;height:4.07px;background:#4a4a4a"></i>
<i style="left:687.1px;top:529.8px;width:4.25px;height:4.07px;background:#4a4a4a"></i>
<i style="left:695.3px;top:529.8px;width:4.25px;height:4.07px;background:#4a4a4a"></i>
<i style="left:687.1px;top:541.8px;width:4.25px;height:4.07px;background:#0a0a0a"></i>
<i style="left:695.3px;top:541.8px;width:4.25px;height:4.07px;background:#0a0a0a"></i>
<i style="left:687.1px;top:545.7px;width:4.25px;height:4.07px;background:#0a0a0a"></i>
<i style="left:691.2px;top:545.7px;width:4.25px;height:4.07px;background:#dadada"></i>
<i style="left:695.3px;top:545.7px;width:4.25px;height:4.07px;background:#8e8e8e"></i>
<i style="left:687.1px;top:549.6px;width:4.25px;height:4.07px;background:#0a0a0a"></i>
<i style="left:695.3px;top:549.6px;width:4.25px;height:4.07px;background:#0a0a0a"></i>
<i style="left:687.1px;top:561.5px;width:4.25px;height:4.07px;background:#dadada"></i>
<i style="left:695.3px;top:561.5px;width:4.25px;height:4.07px;background:#dadada"></i>
<i style="left:678.9px;top:565.4px;width:4.25px;height:4.07px;background:#8e8e8e"></i>
<i style="left:691.2px;top:569.3px;width:4.25px;height:4.07px;background:#4a4a4a"></i>
<i style="left:695.3px;top:569.3px;width:4.25px;height:4.07px;background:#0a0a0a"></i>
<i style="left:678.9px;top:585.3px;width:4.25px;height:4.07px;background:#0a0a0a"></i>
<i style="left:691.2px;top:585.3px;width:4.25px;height:4.07px;background:#4a4a4a"></i>
<i style="left:687.1px;top:589.2px;width:4.25px;height:4.07px;background:#0a0a0a"></i>
<i style="left:770.4px;top:312.8px;width:4.41px;height:4.35px;background:#0a0a0a"></i>
<i style="left:774.7px;top:312.8px;width:4.41px;height:4.35px;background:#dadada"></i>
<i style="left:778.9px;top:312.8px;width:4.41px;height:4.35px;background:#0a0a0a"></i>
<i style="left:774.7px;top:317.0px;width:4.41px;height:4.35px;background:#0a0a0a"></i>
<i style="left:778.9px;top:317.0px;width:4.41px;height:4.35px;background:#0a0a0a"></i>
<i style="left:770.4px;top:321.2px;width:4.41px;height:4.35px;background:#dadada"></i>
<i style="left:761.9px;top:335.2px;width:4.41px;height:4.35px;background:#0a0a0a"></i>
<i style="left:770.4px;top:335.2px;width:4.41px;height:4.35px;background:#dadada"></i>
<i style="left:778.9px;top:335.2px;width:4.41px;height:4.35px;background:#dadada"></i>
<i style="left:774.7px;top:339.4px;width:4.41px;height:4.35px;background:#0a0a0a"></i>
<i style="left:778.9px;top:339.4px;width:4.41px;height:4.35px;background:#0a0a0a"></i>
<i style="left:774.7px;top:357.6px;width:4.41px;height:4.35px;background:#dadada"></i>
<i style="left:778.9px;top:357.6px;width:4.41px;height:4.35px;background:#0a0a0a"></i>
<i style="left:761.9px;top:361.8px;width:4.41px;height:4.35px;background:#4a4a4a"></i>
<i style="left:770.4px;top:361.8px;width:4.41px;height:4.35px;background:#4a4a4a"></i>
<i style="left:774.7px;top:361.8px;width:4.41px;height:4.35px;background:#0a0a0a"></i>
<i style="left:778.9px;top:361.8px;width:4.41px;height:4.35px;background:#0a0a0a"></i>
<i style="left:761.9px;top:375.5px;width:4.41px;height:4.35px;background:#0a0a0a"></i>
<i style="left:770.4px;top:375.5px;width:4.41px;height:4.35px;background:#0a0a0a"></i>
<i style="left:778.9px;top:375.5px;width:4.41px;height:4.35px;background:#0a0a0a"></i>
<i style="left:770.4px;top:379.7px;width:4.41px;height:4.35px;background:#0a0a0a"></i>
<i style="left:774.7px;top:379.7px;width:4.41px;height:4.35px;background:#0a0a0a"></i>
<i style="left:778.9px;top:379.7px;width:4.41px;height:4.35px;background:#0a0a0a"></i>
<i style="left:770.4px;top:383.9px;width:4.41px;height:4.35px;background:#dadada"></i>
<i style="left:778.9px;top:398.0px;width:4.41px;height:4.35px;background:#dadada"></i>
<i style="left:766.2px;top:402.2px;width:4.41px;height:4.35px;background:#8e8e8e"></i>
<i style="left:774.7px;top:402.2px;width:4.41px;height:4.35px;background:#0a0a0a"></i>
<i style="left:778.9px;top:402.2px;width:4.41px;height:4.35px;background:#0a0a0a"></i>
<i style="left:761.9px;top:419.9px;width:4.41px;height:4.35px;background:#0a0a0a"></i>
<i style="left:774.7px;top:419.9px;width:4.41px;height:4.35px;background:#0a0a0a"></i>
<i style="left:778.9px;top:419.9px;width:4.41px;height:4.35px;background:#8e8e8e"></i>
<i style="left:770.4px;top:424.1px;width:4.41px;height:4.35px;background:#8e8e8e"></i>
<i style="left:774.7px;top:424.1px;width:4.41px;height:4.35px;background:#4a4a4a"></i>
<i style="left:778.9px;top:424.1px;width:4.41px;height:4.35px;background:#0a0a0a"></i>
<i style="left:761.9px;top:438.1px;width:4.41px;height:4.35px;background:#0a0a0a"></i>
<i style="left:770.4px;top:438.1px;width:4.41px;height:4.35px;background:#0a0a0a"></i>
<i style="left:774.7px;top:438.1px;width:4.41px;height:4.35px;background:#0a0a0a"></i>
<i style="left:778.9px;top:438.1px;width:4.41px;height:4.35px;background:#0a0a0a"></i>
<i style="left:766.2px;top:442.3px;width:4.41px;height:4.35px;background:#dadada"></i>
<i style="left:770.4px;top:442.3px;width:4.41px;height:4.35px;background:#0a0a0a"></i>
<i style="left:761.9px;top:460.2px;width:4.41px;height:4.35px;background:#4a4a4a"></i>
<i style="left:774.7px;top:460.2px;width:4.41px;height:4.35px;background:#dadada"></i>
<i style="left:766.2px;top:464.4px;width:4.41px;height:4.35px;background:#8e8e8e"></i>
<i style="left:761.9px;top:482.7px;width:4.41px;height:4.35px;background:#0a0a0a"></i>
<i style="left:774.7px;top:482.7px;width:4.41px;height:4.35px;background:#0a0a0a"></i>
<i style="left:778.9px;top:482.7px;width:4.41px;height:4.35px;background:#8e8e8e"></i>
<i style="left:761.9px;top:486.9px;width:4.41px;height:4.35px;background:#0a0a0a"></i>
<i style="left:770.4px;top:486.9px;width:4.41px;height:4.35px;background:#8e8e8e"></i>
<i style="left:774.7px;top:486.9px;width:4.41px;height:4.35px;background:#4a4a4a"></i>
<i style="left:778.9px;top:486.9px;width:4.41px;height:4.35px;background:#0a0a0a"></i>
<i style="left:761.9px;top:500.9px;width:4.41px;height:4.35px;background:#0a0a0a"></i>
<i style="left:770.4px;top:500.9px;width:4.41px;height:4.35px;background:#0a0a0a"></i>
<i style="left:774.7px;top:500.9px;width:4.41px;height:4.35px;background:#8e8e8e"></i>
<i style="left:778.9px;top:500.9px;width:4.41px;height:4.35px;background:#0a0a0a"></i>
<i style="left:761.9px;top:505.1px;width:4.41px;height:4.35px;background:#4a4a4a"></i>
<i style="left:770.4px;top:505.1px;width:4.41px;height:4.35px;background:#0a0a0a"></i>
<i style="left:774.7px;top:523.0px;width:4.41px;height:4.35px;background:#4a4a4a"></i>
<i style="left:774.7px;top:527.2px;width:4.41px;height:4.35px;background:#8e8e8e"></i>
<i style="left:778.9px;top:527.2px;width:4.41px;height:4.35px;background:#0a0a0a"></i>
<i style="left:766.2px;top:545.4px;width:4.41px;height:4.35px;background:#dadada"></i>
<i style="left:770.4px;top:545.4px;width:4.41px;height:4.35px;background:#4a4a4a"></i>
<i style="left:761.9px;top:549.6px;width:4.41px;height:4.35px;background:#4a4a4a"></i>
<i style="left:770.4px;top:549.6px;width:4.41px;height:4.35px;background:#dadada"></i>
<i style="left:753.4px;top:563.5px;width:4.41px;height:4.35px;background:#0a0a0a"></i>
<i style="left:761.9px;top:563.5px;width:4.41px;height:4.35px;background:#0a0a0a"></i>
<i style="left:770.4px;top:563.5px;width:4.41px;height:4.35px;background:#0a0a0a"></i>
<i style="left:774.7px;top:563.5px;width:4.41px;height:4.35px;background:#0a0a0a"></i>
<i style="left:778.9px;top:563.5px;width:4.41px;height:4.35px;background:#0a0a0a"></i>
<i style="left:753.4px;top:567.7px;width:4.41px;height:4.35px;background:#0a0a0a"></i>
<i style="left:766.2px;top:567.7px;width:4.41px;height:4.35px;background:#dadada"></i>
<i style="left:757.6px;top:571.9px;width:4.41px;height:4.35px;background:#4a4a4a"></i>
<i style="left:770.4px;top:571.9px;width:4.41px;height:4.35px;background:#8e8e8e"></i>
<i style="left:753.4px;top:585.9px;width:4.41px;height:4.35px;background:#0a0a0a"></i>
<i style="left:761.9px;top:585.9px;width:4.41px;height:4.35px;background:#0a0a0a"></i>
<i style="left:774.7px;top:585.9px;width:4.41px;height:4.35px;background:#dadada"></i>
<i style="left:753.4px;top:590.1px;width:4.41px;height:4.35px;background:#0a0a0a"></i>
<i style="left:757.6px;top:594.3px;width:4.41px;height:4.35px;background:#8e8e8e"></i>
<i style="left:954.1px;top:317.9px;width:4.75px;height:4.50px;background:#dadada"></i>
<i style="left:954.1px;top:322.2px;width:4.75px;height:4.50px;background:#dadada"></i>
<i style="left:954.1px;top:335.1px;width:4.75px;height:4.50px;background:#0a0a0a"></i>
<i style="left:958.7px;top:335.1px;width:4.75px;height:4.50px;background:#4a4a4a"></i>
<i style="left:963.3px;top:335.1px;width:4.75px;height:4.50px;background:#0a0a0a"></i>
<i style="left:954.1px;top:339.5px;width:4.75px;height:4.50px;background:#0a0a0a"></i>
<i style="left:958.7px;top:339.5px;width:4.75px;height:4.50px;background:#0a0a0a"></i>
<i style="left:963.3px;top:339.5px;width:4.75px;height:4.50px;background:#0a0a0a"></i>
<i style="left:958.7px;top:357.4px;width:4.75px;height:4.50px;background:#0a0a0a"></i>
<i style="left:963.3px;top:357.4px;width:4.75px;height:4.50px;background:#0a0a0a"></i>
<i style="left:958.7px;top:361.8px;width:4.75px;height:4.50px;background:#0a0a0a"></i>
<i style="left:963.3px;top:361.8px;width:4.75px;height:4.50px;background:#0a0a0a"></i>
<i style="left:954.1px;top:375.2px;width:4.75px;height:4.50px;background:#8e8e8e"></i>
<i style="left:954.1px;top:379.6px;width:4.75px;height:4.50px;background:#0a0a0a"></i>
<i style="left:958.7px;top:379.6px;width:4.75px;height:4.50px;background:#0a0a0a"></i>
<i style="left:963.3px;top:379.6px;width:4.75px;height:4.50px;background:#0a0a0a"></i>
<i style="left:954.1px;top:383.9px;width:4.75px;height:4.50px;background:#0a0a0a"></i>
<i style="left:958.7px;top:383.9px;width:4.75px;height:4.50px;background:#4a4a4a"></i>
<i style="left:963.3px;top:383.9px;width:4.75px;height:4.50px;background:#8e8e8e"></i>
<i style="left:954.1px;top:397.2px;width:4.75px;height:4.50px;background:#dadada"></i>
<i style="left:958.7px;top:397.2px;width:4.75px;height:4.50px;background:#8e8e8e"></i>
<i style="left:963.3px;top:397.2px;width:4.75px;height:4.50px;background:#8e8e8e"></i>
<i style="left:954.1px;top:401.6px;width:4.75px;height:4.50px;background:#0a0a0a"></i>
<i style="left:963.3px;top:401.6px;width:4.75px;height:4.50px;background:#0a0a0a"></i>
<i style="left:958.7px;top:419.3px;width:4.75px;height:4.50px;background:#0a0a0a"></i>
<i style="left:963.3px;top:419.3px;width:4.75px;height:4.50px;background:#0a0a0a"></i>
<i style="left:958.7px;top:423.7px;width:4.75px;height:4.50px;background:#0a0a0a"></i>
<i style="left:963.3px;top:423.7px;width:4.75px;height:4.50px;background:#0a0a0a"></i>
<i style="left:954.1px;top:437.1px;width:4.75px;height:4.50px;background:#8e8e8e"></i>
<i style="left:954.1px;top:441.5px;width:4.75px;height:4.50px;background:#0a0a0a"></i>
<i style="left:963.3px;top:441.5px;width:4.75px;height:4.50px;background:#4a4a4a"></i>
<i style="left:954.1px;top:445.8px;width:4.75px;height:4.50px;background:#0a0a0a"></i>
<i style="left:958.7px;top:445.8px;width:4.75px;height:4.50px;background:#0a0a0a"></i>
<i style="left:963.3px;top:445.8px;width:4.75px;height:4.50px;background:#0a0a0a"></i>
<i style="left:954.1px;top:458.9px;width:4.75px;height:4.50px;background:#8e8e8e"></i>
<i style="left:958.7px;top:458.9px;width:4.75px;height:4.50px;background:#0a0a0a"></i>
<i style="left:963.3px;top:458.9px;width:4.75px;height:4.50px;background:#0a0a0a"></i>
<i style="left:958.7px;top:463.2px;width:4.75px;height:4.50px;background:#dadada"></i>
<i style="left:963.3px;top:463.2px;width:4.75px;height:4.50px;background:#0a0a0a"></i>
<i style="left:958.7px;top:481.1px;width:4.75px;height:4.50px;background:#0a0a0a"></i>
<i style="left:963.3px;top:481.1px;width:4.75px;height:4.50px;background:#0a0a0a"></i>
<i style="left:958.7px;top:485.5px;width:4.75px;height:4.50px;background:#0a0a0a"></i>
<i style="left:963.3px;top:485.5px;width:4.75px;height:4.50px;background:#0a0a0a"></i>
<i style="left:954.1px;top:499.0px;width:4.75px;height:4.50px;background:#dadada"></i>
<i style="left:963.3px;top:499.0px;width:4.75px;height:4.50px;background:#dadada"></i>
<i style="left:954.1px;top:503.4px;width:4.75px;height:4.50px;background:#0a0a0a"></i>
<i style="left:958.7px;top:503.4px;width:4.75px;height:4.50px;background:#8e8e8e"></i>
<i style="left:963.3px;top:503.4px;width:4.75px;height:4.50px;background:#dadada"></i>
<i style="left:963.3px;top:507.7px;width:4.75px;height:4.50px;background:#dadada"></i>
<i style="left:954.1px;top:521.0px;width:4.75px;height:4.50px;background:#0a0a0a"></i>
<i style="left:958.7px;top:521.0px;width:4.75px;height:4.50px;background:#0a0a0a"></i>
<i style="left:963.3px;top:521.0px;width:4.75px;height:4.50px;background:#0a0a0a"></i>
<i style="left:949.5px;top:525.4px;width:4.75px;height:4.50px;background:#dadada"></i>
<i style="left:954.1px;top:525.4px;width:4.75px;height:4.50px;background:#4a4a4a"></i>
<i style="left:958.7px;top:525.4px;width:4.75px;height:4.50px;background:#0a0a0a"></i>
<i style="left:963.3px;top:525.4px;width:4.75px;height:4.50px;background:#0a0a0a"></i>
<i style="left:958.7px;top:543.1px;width:4.75px;height:4.50px;background:#0a0a0a"></i>
<i style="left:963.3px;top:543.1px;width:4.75px;height:4.50px;background:#0a0a0a"></i>
<i style="left:958.7px;top:547.5px;width:4.75px;height:4.50px;background:#0a0a0a"></i>
<i style="left:963.3px;top:547.5px;width:4.75px;height:4.50px;background:#0a0a0a"></i>
<i style="left:954.1px;top:560.6px;width:4.75px;height:4.50px;background:#8e8e8e"></i>
<i style="left:954.1px;top:565.0px;width:4.75px;height:4.50px;background:#0a0a0a"></i>
<i style="left:963.3px;top:565.0px;width:4.75px;height:4.50px;background:#dadada"></i>
<i style="left:954.1px;top:569.3px;width:4.75px;height:4.50px;background:#0a0a0a"></i>
<i style="left:958.7px;top:569.3px;width:4.75px;height:4.50px;background:#4a4a4a"></i>
<i style="left:963.3px;top:569.3px;width:4.75px;height:4.50px;background:#4a4a4a"></i>
<i style="left:954.1px;top:583.2px;width:4.75px;height:4.50px;background:#0a0a0a"></i>
<i style="left:958.7px;top:583.2px;width:4.75px;height:4.50px;background:#0a0a0a"></i>
<i style="left:963.3px;top:583.2px;width:4.75px;height:4.50px;background:#0a0a0a"></i>
<i style="left:949.5px;top:587.6px;width:4.75px;height:4.50px;background:#dadada"></i>
<i style="left:954.1px;top:587.6px;width:4.75px;height:4.50px;background:#4a4a4a"></i>
<i style="left:963.3px;top:587.6px;width:4.75px;height:4.50px;background:#0a0a0a"></i>
<i style="left:1054.6px;top:316.0px;width:4.65px;height:4.55px;background:#dadada"></i>
<i style="left:1059.1px;top:316.0px;width:4.65px;height:4.55px;background:#0a0a0a"></i>
<i style="left:1063.6px;top:316.0px;width:4.65px;height:4.55px;background:#dadada"></i>
<i style="left:1054.6px;top:320.4px;width:4.65px;height:4.55px;background:#8e8e8e"></i>
<i style="left:1063.6px;top:320.4px;width:4.65px;height:4.55px;background:#0a0a0a"></i>
<i style="left:1059.1px;top:334.8px;width:4.65px;height:4.55px;background:#dadada"></i>
<i style="left:1063.6px;top:334.8px;width:4.65px;height:4.55px;background:#8e8e8e"></i>
<i style="left:1059.1px;top:339.2px;width:4.65px;height:4.55px;background:#0a0a0a"></i>
<i style="left:1054.6px;top:343.6px;width:4.65px;height:4.55px;background:#0a0a0a"></i>
<i style="left:1059.1px;top:343.6px;width:4.65px;height:4.55px;background:#0a0a0a"></i>
<i style="left:1063.6px;top:343.6px;width:4.65px;height:4.55px;background:#0a0a0a"></i>
<i style="left:1054.6px;top:357.1px;width:4.65px;height:4.55px;background:#0a0a0a"></i>
<i style="left:1059.1px;top:357.1px;width:4.65px;height:4.55px;background:#0a0a0a"></i>
<i style="left:1063.6px;top:357.1px;width:4.65px;height:4.55px;background:#4a4a4a"></i>
<i style="left:1059.1px;top:361.5px;width:4.65px;height:4.55px;background:#0a0a0a"></i>
<i style="left:1054.6px;top:378.9px;width:4.65px;height:4.55px;background:#4a4a4a"></i>
<i style="left:1063.6px;top:378.9px;width:4.65px;height:4.55px;background:#8e8e8e"></i>
<i style="left:1054.6px;top:383.3px;width:4.65px;height:4.55px;background:#0a0a0a"></i>
<i style="left:1059.1px;top:383.3px;width:4.65px;height:4.55px;background:#0a0a0a"></i>
<i style="left:1054.6px;top:396.6px;width:4.65px;height:4.55px;background:#8e8e8e"></i>
<i style="left:1059.1px;top:396.6px;width:4.65px;height:4.55px;background:#8e8e8e"></i>
<i style="left:1063.6px;top:396.6px;width:4.65px;height:4.55px;background:#8e8e8e"></i>
<i style="left:1063.6px;top:401.0px;width:4.65px;height:4.55px;background:#0a0a0a"></i>
<i style="left:1063.6px;top:405.4px;width:4.65px;height:4.55px;background:#0a0a0a"></i>
<i style="left:1050.1px;top:418.4px;width:4.65px;height:4.55px;background:#0a0a0a"></i>
<i style="left:1054.6px;top:418.4px;width:4.65px;height:4.55px;background:#4a4a4a"></i>
<i style="left:1059.1px;top:418.4px;width:4.65px;height:4.55px;background:#0a0a0a"></i>
<i style="left:1063.6px;top:418.4px;width:4.65px;height:4.55px;background:#dadada"></i>
<i style="left:1050.1px;top:422.8px;width:4.65px;height:4.55px;background:#0a0a0a"></i>
<i style="left:1054.6px;top:422.8px;width:4.65px;height:4.55px;background:#0a0a0a"></i>
<i style="left:1059.1px;top:422.8px;width:4.65px;height:4.55px;background:#0a0a0a"></i>
<i style="left:1063.6px;top:422.8px;width:4.65px;height:4.55px;background:#8e8e8e"></i>
<i style="left:1059.1px;top:441.1px;width:4.65px;height:4.55px;background:#0a0a0a"></i>
<i style="left:1063.6px;top:441.1px;width:4.65px;height:4.55px;background:#8e8e8e"></i>
<i style="left:1054.6px;top:445.5px;width:4.65px;height:4.55px;background:#0a0a0a"></i>
<i style="left:1059.1px;top:445.5px;width:4.65px;height:4.55px;background:#0a0a0a"></i>
<i style="left:1059.1px;top:458.9px;width:4.65px;height:4.55px;background:#dadada"></i>
<i style="left:1063.6px;top:458.9px;width:4.65px;height:4.55px;background:#8e8e8e"></i>
<i style="left:1054.6px;top:463.3px;width:4.65px;height:4.55px;background:#8e8e8e"></i>
<i style="left:1059.1px;top:463.3px;width:4.65px;height:4.55px;background:#dadada"></i>
<i style="left:1063.6px;top:463.3px;width:4.65px;height:4.55px;background:#8e8e8e"></i>
<i style="left:1059.1px;top:467.7px;width:4.65px;height:4.55px;background:#dadada"></i>
<i style="left:1063.6px;top:467.7px;width:4.65px;height:4.55px;background:#0a0a0a"></i>
<i style="left:1054.6px;top:480.6px;width:4.65px;height:4.55px;background:#4a4a4a"></i>
<i style="left:1059.1px;top:480.6px;width:4.65px;height:4.55px;background:#0a0a0a"></i>
<i style="left:1063.6px;top:480.6px;width:4.65px;height:4.55px;background:#4a4a4a"></i>
<i style="left:1054.6px;top:485.0px;width:4.65px;height:4.55px;background:#0a0a0a"></i>
<i style="left:1059.1px;top:485.0px;width:4.65px;height:4.55px;background:#0a0a0a"></i>
<i style="left:1054.6px;top:502.8px;width:4.65px;height:4.55px;background:#4a4a4a"></i>
<i style="left:1059.1px;top:502.8px;width:4.65px;height:4.55px;background:#0a0a0a"></i>
<i style="left:1063.6px;top:502.8px;width:4.65px;height:4.55px;background:#8e8e8e"></i>
<i style="left:1054.6px;top:507.2px;width:4.65px;height:4.55px;background:#0a0a0a"></i>
<i style="left:1059.1px;top:507.2px;width:4.65px;height:4.55px;background:#0a0a0a"></i>
<i style="left:1063.6px;top:520.5px;width:4.65px;height:4.55px;background:#8e8e8e"></i>
<i style="left:1054.6px;top:524.9px;width:4.65px;height:4.55px;background:#0a0a0a"></i>
<i style="left:1059.1px;top:524.9px;width:4.65px;height:4.55px;background:#0a0a0a"></i>
<i style="left:1054.6px;top:529.3px;width:4.65px;height:4.55px;background:#dadada"></i>
<i style="left:1059.1px;top:529.3px;width:4.65px;height:4.55px;background:#8e8e8e"></i>
<i style="left:1063.6px;top:529.3px;width:4.65px;height:4.55px;background:#0a0a0a"></i>
<i style="left:1054.6px;top:543.1px;width:4.65px;height:4.55px;background:#0a0a0a"></i>
<i style="left:1059.1px;top:543.1px;width:4.65px;height:4.55px;background:#0a0a0a"></i>
<i style="left:1063.6px;top:543.1px;width:4.65px;height:4.55px;background:#8e8e8e"></i>
<i style="left:1059.1px;top:547.5px;width:4.65px;height:4.55px;background:#0a0a0a"></i>
<i style="left:1059.1px;top:565.1px;width:4.65px;height:4.55px;background:#dadada"></i>
<i style="left:1063.6px;top:565.1px;width:4.65px;height:4.55px;background:#0a0a0a"></i>
<i style="left:1063.6px;top:569.5px;width:4.65px;height:4.55px;background:#dadada"></i>
<i style="left:1054.6px;top:582.6px;width:4.65px;height:4.55px;background:#8e8e8e"></i>
<i style="left:1059.1px;top:582.6px;width:4.65px;height:4.55px;background:#8e8e8e"></i>
<i style="left:1063.6px;top:582.6px;width:4.65px;height:4.55px;background:#8e8e8e"></i>
<i style="left:1063.6px;top:587.0px;width:4.65px;height:4.55px;background:#8e8e8e"></i>
<i style="left:1063.6px;top:591.4px;width:4.65px;height:4.55px;background:#0a0a0a"></i>
</div>
<!-- ===== scrollbars ===== -->
<div class="a" style="left:1129.500px;top:208px;width:16px;height:494px;background:#f4f5f6;border-left:1px solid #d9dadc"></div>
<div class="a" style="left:1129.500px;top:208px;width:16px;height:24.500px;background:#f8f9fa;border-left:1px solid #cfd1d4;border-bottom:2px solid #d0d2d5"></div>
<div class="a" style="left:0;top:686px;width:1146px;height:16px;background:#f4f5f6;border-top:1px solid #d9dadc"></div>
<div class="a" style="left:124.700px;top:686px;width:4.600px;height:16px;background:#dde2eb"></div>
<!-- ===== bottom sheet tab bar ===== -->
<div class="a" style="left:0;top:702px;width:1146px;height:39px;background:#f1f3f4;border-top:1px solid #e3e5e8"></div>
<svg style="left:47.500px;top:713.500px" width="11" height="11" viewBox="0 0 11 11"><path d="M5.500 0v11M0 5.500h11" stroke="#444746" stroke-width="1.700"/></svg>
<svg style="left:78px;top:714px" width="12" height="11" viewBox="0 0 12 11"><path d="M0 1h12M0 4h12M0 7h12M0 10h12" stroke="#444746" stroke-width="1.500"/></svg>
<div class="a" style="left:114px;top:702px;width:107.500px;height:39px;background:#fff;box-shadow:0 1px 3px rgba(60,64,67,.25)"></div>
<div class="t sheettab" style="left:130px;color:#188038">Tracking</div>
<svg style="left:197px;top:718.500px" width="8" height="4" viewBox="0 0 8 4"><path d="M0 0h8L4 4z" fill="#188038"/></svg>
<div class="t sheettab" style="left:237px">Guidelines</div>
<svg style="left:318px;top:718.500px" width="8" height="4" viewBox="0 0 8 4"><path d="M0 0h8L4 4z" fill="#80868b"/></svg>
<div class="a" style="left:342px;top:703px;width:1px;height:38px;background:#e3e5e8"></div>
<div class="t sheettab" style="left:358px">Running Costs</div>
<svg style="left:466px;top:718.500px" width="8" height="4" viewBox="0 0 8 4"><path d="M0 0h8L4 4z" fill="#80868b"/></svg>
<div class="a" style="left:489px;top:703px;width:1px;height:38px;background:#e3e5e8"></div>
<div class="t sheettab" style="left:506px">Expenses</div>
<svg style="left:579px;top:718.500px" width="8" height="4" viewBox="0 0 8 4"><path d="M0 0h8L4 4z" fill="#80868b"/></svg>
<div class="a" style="left:603.500px;top:703px;width:1px;height:38px;background:#e3e5e8"></div>
<div class="t sheettab" style="left:620px">P&amp;L</div>
<svg style="left:656px;top:718.500px" width="8" height="4" viewBox="0 0 8 4"><path d="M0 0h8L4 4z" fill="#80868b"/></svg>
<div class="a" style="left:680px;top:703px;width:1px;height:38px;background:#e3e5e8"></div>
<div class="t sheettab" style="left:696px;width:46px;overflow:hidden">Funnel</div>
<div class="a" style="left:742px;top:703px;width:8px;height:38px;background:linear-gradient(90deg,rgba(241,243,244,0),#d9dbde 70%,#f1f3f4)"></div>
<svg style="left:763px;top:714px" width="6" height="10" viewBox="0 0 6 10"><path d="M6 0v10L0 5z" fill="#bdc1c6"/></svg>
<svg style="left:794px;top:714px" width="6" height="10" viewBox="0 0 6 10"><path d="M0 0v10l6-5z" fill="#202124"/></svg>
<!-- explore -->
<div class="a" style="left:1043px;top:703px;width:103px;height:38px;background:#fff;border-left:1px solid #dadce0"></div>
<svg style="left:1054px;top:711.500px" width="19" height="22" viewBox="0 0 19 22"><path d="M2 0h15a2 2 0 0 1 2 2v14a2 2 0 0 1-2 2h-5l-2.500 3.500L7 18H2a2 2 0 0 1-2-2V2a2 2 0 0 1 2-2z" fill="#1e8e3e"/><path d="M9.500 3.500l1.400 4.100 4.100 1.400-4.100 1.400-1.400 4.100-1.400-4.100L4 9l4.100-1.400z" fill="#fff"/></svg>
<div class="t" style="left:1086px;top:717.300px;font-size:12px;color:#188038;-webkit-text-stroke:.35px #188038;letter-spacing:-.33px">Explore</div>
<!-- ===== Side panel ===== -->
<div class="a" style="left:1145px;top:146.500px;width:55px;height:595px;background:#fff;border-left:1px solid #d3d5d8"></div>
<!-- calendar -->
<svg style="left:1164px;top:164px" width="19" height="19" viewBox="0 0 19 19"><rect x="0" y="0" width="19" height="19" rx="2" fill="#4285f4"/><path d="M0 14h5v5H2a2 2 0 0 1-2-2z" fill="#188038"/><path d="M14 0h3a2 2 0 0 1 2 2v3h-5z" fill="#1967d2"/><path d="M14 5h5v9h-5z" fill="#fbbc04"/><path d="M5 14h9v5H5z" fill="#34a853"/><path d="M14 14h5l-5 5z" fill="#ea4335"/><rect x="4.500" y="4.500" width="10" height="10" fill="#fff"/></svg>
<div class="t" style="left:1168.500px;top:169.500px;width:10px;text-align:center;font-size:8.500px;font-weight:bold;color:#1a73e8;letter-spacing:-.5px">31</div>
<!-- keep -->
<svg style="left:1164.300px;top:220px" width="18.600" height="18.900" viewBox="0 0 20 20"><rect width="20" height="20" rx="2.500" fill="#f9ab00"/><path d="M10 4a4 4 0 0 0-2.200 7.300V13h4.400v-1.700A4 4 0 0 0 10 4zM8 14.200h4v1.500H8z" fill="#fff"/></svg>
<!-- tasks -->
<svg style="left:1163.500px;top:275px" width="20" height="20" viewBox="0 0 20 20"><circle cx="9.500" cy="10.800" r="6.800" stroke="#1a73e8" stroke-width="3.100" fill="none"/><path d="M6 10.500l3 3L18 3.500" stroke="#fff" stroke-width="5" fill="none"/><path d="M6 10.500l3 3L17.500 4" stroke="#1a73e8" stroke-width="2.600" fill="none" stroke-linecap="round"/></svg>
<!-- contacts -->
<svg style="left:1165.500px;top:331px" width="16" height="18" viewBox="0 0 16 18"><circle cx="8" cy="4.200" r="3.700" fill="#1a56db"/><path d="M0 17.500v-3.500c0-3 3.500-5 8-5s8 2 8 5v3.500z" fill="#1a73e8"/><path d="M3.500 17.500v-3a4.500 4.500 0 0 1 9 0v3z" fill="#174ea6"/></svg>
<!-- maps -->
<svg style="left:1166.500px;top:383px" width="14" height="20" viewBox="0 0 14 20"><path d="M7 0a7 7 0 0 0-7 7c0 4.500 5 8 7 13 2-5 7-8.500 7-13a7 7 0 0 0-7-7z" fill="#34a853"/><path d="M7 0a7 7 0 0 0-5.400 2.600L7 7z" fill="#ea4335"/><path d="M1.600 2.600A7 7 0 0 0 .6 10L7 7z" fill="#fbbc04"/><path d="M7 0l0 7 5.400-4.400A7 7 0 0 0 7 0z" fill="#1a73e8"/><path d="M12.400 2.600L7 7l6.400 2.500A7 7 0 0 0 12.400 2.600z" fill="#4285f4"/><circle cx="7" cy="7" r="2.500" fill="#fff"/></svg>
<div class="a" style="left:1162px;top:436.500px;width:22px;height:1px;background:#dadce0"></div>
<svg style="left:1166px;top:474px" width="15" height="15" viewBox="0 0 15 15"><path d="M7.500 0v15M0 7.500h15" stroke="#202124" stroke-width="1.800"/></svg>
<svg style="left:1169px;top:707px" width="8" height="12" viewBox="0 0 8 12"><path d="M1.500 1l5 5-5 5" stroke="#444746" stroke-width="1.700" fill="none"/></svg>
</body></html>
